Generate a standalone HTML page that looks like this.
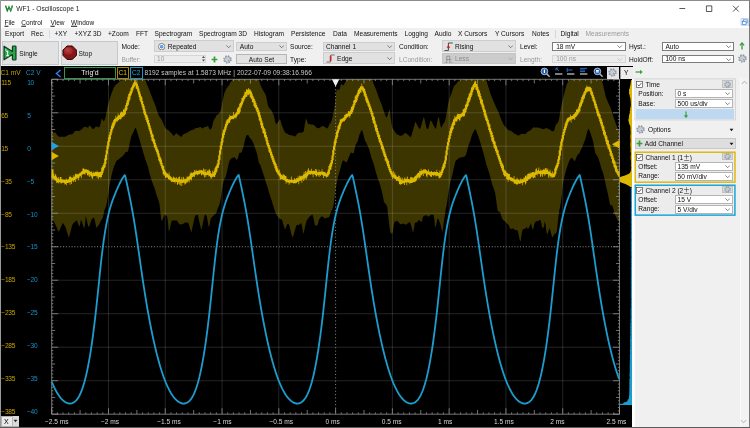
<!DOCTYPE html>
<html><head><meta charset="utf-8"><title>WF1 - Oscilloscope 1</title>
<style>
html,body{margin:0;padding:0}
body{width:750px;height:428px;overflow:hidden;position:relative;background:#f0f0f0;font-family:"Liberation Sans","Noto Sans CJK JP",sans-serif;font-size:6.6px;color:#111;line-height:1}
.a{position:absolute;white-space:nowrap}
.t{position:absolute;white-space:nowrap;transform:translateY(-50%)}
.tc{position:absolute;white-space:nowrap;transform:translate(-50%,-50%)}
.btn{position:absolute;background:#e2e2e2;border:0.6px solid #c2c9cf;box-sizing:border-box}
.cb{position:absolute;background:#fff;border:0.6px solid #b4b4b4;box-sizing:border-box;height:9.4px}
.cb.d{background:#e6e6e6;border-color:#cfcfcf;color:#9a9a9a}
.cb span{position:absolute;left:2.6px;top:50%;transform:translateY(-50%);white-space:nowrap}
.cb i{position:absolute;right:2.4px;top:2.4px;width:2.6px;height:2.6px;border-right:0.7px solid #555;border-bottom:0.7px solid #555;transform:rotate(45deg) scale(1.15,1.15);transform-origin:center}
.cb.d i{border-color:#aaa}
.g{color:#9a9a9a}
.yl{color:#c4a300}
.bl{color:#1b90c4}
#w{position:absolute;left:0;top:0;width:750px;height:428px;overflow:hidden;will-change:transform}
</style></head><body><div id="w">
<div class="a" style="left:0;top:0;width:750px;height:28px;background:#fff"></div>
<div class="a" style="left:0;top:0;width:750px;height:1px;background:#8c8c8c"></div>
<div class="a" style="left:0;top:0;width:1px;height:428px;background:#9a9a9a"></div>
<svg class="a" style="left:4.8px;top:5.2px" width="8" height="6.6" viewBox="0 0 8 6.6"><path d="M0.5 0.5 L2.3 5.8 L4 2 L5.7 5.8 L7.5 0.5" fill="none" stroke="#1f7f34" stroke-width="1.4" stroke-linejoin="miter"/><path d="M4 2 L5.7 5.8 L7.5 0.5" fill="none" stroke="#35a548" stroke-width="0.9"/></svg>
<div class="t" style="left:16.3px;top:9.3px;font-size:6.65px;color:#222">WF1 - Oscilloscope 1</div>
<svg class="a" style="left:600px;top:0" width="150" height="16" viewBox="0 0 150 16"><path d="M79.4 8.5h5.8 M106.4 5.9h5.4v5.6h-5.4z M133 5.8l5.8 5.8 M138.8 5.8l-5.8 5.8" fill="none" stroke="#222" stroke-width="0.75"/></svg>
<div class="t" style="left:4.5px;top:23.2px;font-size:6.5px"><u>F</u>ile</div>
<div class="t" style="left:21.3px;top:23.2px;font-size:6.5px"><u>C</u>ontrol</div>
<div class="t" style="left:50.5px;top:23.2px;font-size:6.5px"><u>V</u>iew</div>
<div class="t" style="left:71.0px;top:23.2px;font-size:6.5px"><u>W</u>indow</div>
<svg class="a" style="left:740.2px;top:17.8px" width="9.6" height="8.4" viewBox="0 0 9 9"><rect x="0.4" y="0.4" width="8.2" height="8.2" rx="1" fill="#dbe9fa" stroke="#9fc0ea" stroke-width="0.6"/><rect x="3" y="2" width="4" height="3.2" fill="#fff" stroke="#3f78c8" stroke-width="0.7"/><rect x="1.8" y="3.6" width="4" height="3.2" fill="#fff" stroke="#3f78c8" stroke-width="0.7"/></svg>
<div class="a" style="left:1px;top:28px;width:749px;height:12px;background:#f0f0f0"></div>
<div class="t" style="left:5.0px;top:34.2px">Export</div>
<div class="t" style="left:31.0px;top:34.2px">Rec.</div>
<div class="t" style="left:54.5px;top:34.2px">+XY</div>
<div class="t" style="left:74.5px;top:34.2px">+XYZ 3D</div>
<div class="t" style="left:108.0px;top:34.2px">+Zoom</div>
<div class="t" style="left:136.0px;top:34.2px">FFT</div>
<div class="t" style="left:154.5px;top:34.2px">Spectrogram</div>
<div class="t" style="left:199.0px;top:34.2px">Spectrogram 3D</div>
<div class="t" style="left:254.0px;top:34.2px">Histogram</div>
<div class="t" style="left:291.0px;top:34.2px">Persistence</div>
<div class="t" style="left:333.0px;top:34.2px">Data</div>
<div class="t" style="left:354.0px;top:34.2px">Measurements</div>
<div class="t" style="left:404.5px;top:34.2px">Logging</div>
<div class="t" style="left:434.5px;top:34.2px">Audio</div>
<div class="t" style="left:458.0px;top:34.2px">X Cursors</div>
<div class="t" style="left:495.0px;top:34.2px">Y Cursors</div>
<div class="t" style="left:532.0px;top:34.2px">Notes</div>
<div class="t" style="left:560.5px;top:34.2px">Digital</div>
<div class="t g" style="left:585.5px;top:34.2px">Measurements</div>
<div class="a" style="left:49.3px;top:30px;width:0.6px;height:8px;background:#dadada"></div>
<div class="a" style="left:555.3px;top:30px;width:0.6px;height:8px;background:#d6d6d6"></div>
<div class="btn" style="left:2px;top:41px;width:56.5px;height:23.5px"></div>
<div class="btn" style="left:61px;top:41px;width:56.5px;height:23.5px"></div>
<svg class="a" style="left:3.4px;top:44.8px" width="14" height="16" viewBox="0 0 14 16"><path d="M1 1.2 L1 14.8 L9.4 9.6 L9.4 14.2 Q9.4 15 10.2 15 L12.2 15 Q13 15 13 14.2 L13 1.8 Q13 1 12.2 1 L10.2 1 Q9.4 1 9.4 1.8 L9.4 6.4 Z" fill="#27a548" stroke="#0d3a1c" stroke-width="1.15" stroke-linejoin="round"/><path d="M2 3.4L4.4 5L2 6.2Z" fill="#8ad898"/><path d="M3.5 5.8h1.7v4.4h0.9v1h-3v-1h1v-3.2h-0.9z" fill="#fff"/></svg>
<div class="t" style="left:19.3px;top:53.8px">Single</div>
<svg class="a" style="left:62.2px;top:44.8px" width="15.4" height="15.4" viewBox="0 0 16 16"><path d="M5.2 1 L10.8 1 L15 5.2 L15 10.8 L10.8 15 L5.2 15 L1 10.8 L1 5.2 Z" fill="#861616" stroke="#2e0606" stroke-width="1"/><ellipse cx="6.6" cy="6" rx="4.6" ry="3.8" fill="#c24a4a" opacity="0.45"/><ellipse cx="6" cy="5.2" rx="2.6" ry="2" fill="#d06060" opacity="0.35"/></svg>
<div class="t" style="left:78.5px;top:53.8px">Stop</div>
<div class="t" style="left:121.5px;top:46.9px">Mode:</div>
<div class="t g" style="left:121.5px;top:59.5px">Buffer:</div>
<div class="a" style="left:154.0px;top:40.4px;width:80.4px;height:11.2px;background:#e1e1e1;border:0.6px solid #cdcdcd;box-sizing:border-box;color:#111"><span class="t" style="left:12.8px;top:5.5px">Repeated</span><svg class="a" style="right:2.0px;top:50%;margin-top:-1.3px" width="5.4" height="3.2" viewBox="0 0 5.4 3.2"><path d="M0.4 0.4L2.7 2.7L5 0.4" fill="none" stroke="#444" stroke-width="0.65"/></svg></div>
<svg class="a" style="left:157.6px;top:42.7px" width="7.4" height="7.4" viewBox="0 0 7.4 7.4"><circle cx="3.7" cy="3.7" r="3.2" fill="#fff" stroke="#505050" stroke-width="0.7"/><circle cx="3.7" cy="3.7" r="1.8" fill="#2f7fe0"/><path d="M3.2 2.9v1.6M4.2 2.9v1.6" stroke="#fff" stroke-width="0.45"/></svg>
<div class="a" style="left:236.0px;top:41.6px;width:51.0px;height:9.0px;background:#e1e1e1;border:0.6px solid #cdcdcd;box-sizing:border-box;color:#111"><span class="t" style="left:2.8px;top:4.3px">Auto</span><svg class="a" style="right:2.0px;top:50%;margin-top:-1.3px" width="5.4" height="3.2" viewBox="0 0 5.4 3.2"><path d="M0.4 0.4L2.7 2.7L5 0.4" fill="none" stroke="#444" stroke-width="0.65"/></svg></div>
<div class="a" style="left:154.0px;top:54.6px;width:52.4px;height:8.8px;background:#ececec;border:0.6px solid #d6d6d6;box-sizing:border-box;color:#9a9a9a"><span class="t" style="left:2.0px;top:3.8px">10</span></div>
<svg class="a" style="left:200.6px;top:55.2px" width="5" height="7.4" viewBox="0 0 5 7.4"><path d="M1 2.9L2.5 1L4 2.9Z M1 4.5L2.5 6.4L4 4.5Z" fill="#444"/></svg>
<svg class="a" style="left:210.7px;top:55.6px" width="7" height="7" viewBox="0 0 7 7"><path d="M3.5 0.6v5.8M0.6 3.5h5.8" stroke="#2da332" stroke-width="1.7"/></svg>
<svg class="a" style="left:223px;top:54.5px" width="9" height="9" viewBox="0 0 9 9"><circle cx="4.5" cy="4.5" r="3.5" fill="none" stroke="#8e98a4" stroke-width="1.5" stroke-dasharray="1.5 1.25"/><circle cx="4.5" cy="4.5" r="2.7" fill="#e6eaef" stroke="#808b98" stroke-width="0.8"/><circle cx="4.5" cy="4.5" r="1.1" fill="#fbfcfd" stroke="#7a8694" stroke-width="0.5"/><path d="M4.5 4.5L6.3 6.3" stroke="#5f8fc8" stroke-width="0.7"/></svg>
<div class="btn" style="left:236px;top:53.6px;width:51px;height:10.8px;border-color:#b6b6b6"></div>
<div class="tc" style="left:261.5px;top:59.5px">Auto Set</div>
<div class="t" style="left:290px;top:46.9px">Source:</div>
<div class="t" style="left:290px;top:59.5px">Type:</div>
<div class="a" style="left:323.0px;top:41.6px;width:72.4px;height:9.0px;background:#e1e1e1;border:0.6px solid #cdcdcd;box-sizing:border-box;color:#111"><span class="t" style="left:2.0px;top:4.3px">Channel 1</span><svg class="a" style="right:2.0px;top:50%;margin-top:-1.3px" width="5.4" height="3.2" viewBox="0 0 5.4 3.2"><path d="M0.4 0.4L2.7 2.7L5 0.4" fill="none" stroke="#444" stroke-width="0.65"/></svg></div>
<div class="a" style="left:323.0px;top:52.4px;width:72.4px;height:12.0px;background:#e1e1e1;border:0.6px solid #cdcdcd;box-sizing:border-box;color:#111"><span class="t" style="left:13.0px;top:6.0px">Edge</span><svg class="a" style="right:2.0px;top:50%;margin-top:-1.3px" width="5.4" height="3.2" viewBox="0 0 5.4 3.2"><path d="M0.4 0.4L2.7 2.7L5 0.4" fill="none" stroke="#444" stroke-width="0.65"/></svg></div>
<svg class="a" style="left:325.6px;top:54px" width="9" height="9" viewBox="0 0 9 9"><path d="M0.6 8H4.6V1H8.6" fill="none" stroke="#555" stroke-width="0.8"/><path d="M4.6 6.9V2.1" stroke="#d42020" stroke-width="1.7"/></svg>
<div class="t" style="left:399px;top:46.9px">Condition:</div>
<div class="t g" style="left:399px;top:59.5px">LCondition:</div>
<div class="a" style="left:442.0px;top:40.4px;width:74.4px;height:11.2px;background:#e1e1e1;border:0.6px solid #cdcdcd;box-sizing:border-box;color:#111"><span class="t" style="left:12.0px;top:5.5px">Rising</span><svg class="a" style="right:2.0px;top:50%;margin-top:-1.3px" width="5.4" height="3.2" viewBox="0 0 5.4 3.2"><path d="M0.4 0.4L2.7 2.7L5 0.4" fill="none" stroke="#444" stroke-width="0.65"/></svg></div>
<svg class="a" style="left:443.8px;top:41.6px" width="9.4" height="9.4" viewBox="0 0 9.4 9.4"><path d="M0.4 8.6H4.4V1H8.8" fill="none" stroke="#333" stroke-width="0.85"/><path d="M3 5.6L4.4 3.4L5.8 5.6Z" fill="#d81818" stroke="#d81818" stroke-width="0.5"/><path d="M4.4 5.4V6.6" stroke="#d81818" stroke-width="0.8"/></svg>
<div class="a" style="left:442.0px;top:53.0px;width:74.4px;height:11.4px;background:#cccccc;border:0.6px solid #c4c4c4;box-sizing:border-box;color:#8c8c8c"><span class="t" style="left:12.0px;top:5.4px">Less</span><svg class="a" style="right:2.0px;top:50%;margin-top:-1.3px" width="5.4" height="3.2" viewBox="0 0 5.4 3.2"><path d="M0.4 0.4L2.7 2.7L5 0.4" fill="none" stroke="#9a9a9a" stroke-width="0.65"/></svg></div>
<svg class="a" style="left:443.8px;top:54.6px" width="9.4" height="8.6" viewBox="0 0 9.4 8.6"><path d="M0.4 8H2.8V1.2H5.8V8H9 M2 4.6h5.4" fill="none" stroke="#8a8a8a" stroke-width="0.85"/></svg>
<div class="t" style="left:520px;top:46.9px">Level:</div>
<div class="t g" style="left:520px;top:59.5px">Length:</div>
<div class="a" style="left:552.4px;top:41.6px;width:73.2px;height:9.0px;background:#fff;border:0.6px solid #7c7c7c;box-sizing:border-box;color:#111"><span class="t" style="left:2.8px;top:4.3px">18 mV</span><svg class="a" style="right:2.0px;top:50%;margin-top:-1.3px" width="5.4" height="3.2" viewBox="0 0 5.4 3.2"><path d="M0.4 0.4L2.7 2.7L5 0.4" fill="none" stroke="#444" stroke-width="0.65"/></svg></div>
<div class="a" style="left:552.4px;top:54.6px;width:73.2px;height:8.8px;background:#ececec;border:0.6px solid #d6d6d6;box-sizing:border-box;color:#9a9a9a"><span class="t" style="left:2.8px;top:3.8px">100 ns</span><svg class="a" style="right:2.0px;top:50%;margin-top:-1.3px" width="5.4" height="3.2" viewBox="0 0 5.4 3.2"><path d="M0.4 0.4L2.7 2.7L5 0.4" fill="none" stroke="#b0b0b0" stroke-width="0.65"/></svg></div>
<div class="t" style="left:629px;top:46.9px">Hyst.:</div>
<div class="t" style="left:629px;top:59.5px">HoldOff:</div>
<div class="a" style="left:661.6px;top:41.6px;width:72.8px;height:9.0px;background:#fff;border:0.6px solid #7c7c7c;box-sizing:border-box;color:#111"><span class="t" style="left:2.8px;top:4.3px">Auto</span><svg class="a" style="right:2.0px;top:50%;margin-top:-1.3px" width="5.4" height="3.2" viewBox="0 0 5.4 3.2"><path d="M0.4 0.4L2.7 2.7L5 0.4" fill="none" stroke="#444" stroke-width="0.65"/></svg></div>
<div class="a" style="left:661.6px;top:54.6px;width:72.8px;height:8.8px;background:#fff;border:0.6px solid #7c7c7c;box-sizing:border-box;color:#111"><span class="t" style="left:2.8px;top:3.8px">100 ns</span><svg class="a" style="right:2.0px;top:50%;margin-top:-1.3px" width="5.4" height="3.2" viewBox="0 0 5.4 3.2"><path d="M0.4 0.4L2.7 2.7L5 0.4" fill="none" stroke="#444" stroke-width="0.65"/></svg></div>
<svg class="a" style="left:739px;top:42.3px" width="6" height="8" viewBox="0 0 6 8"><path d="M3 7.4V2.4 M0.9 3.4L3 0.9L5.1 3.4" fill="none" stroke="#3c9a3c" stroke-width="1.3"/></svg>
<svg class="a" style="left:737.5px;top:54.2px" width="9" height="9" viewBox="0 0 9 9"><circle cx="4.5" cy="4.5" r="3.5" fill="none" stroke="#8e98a4" stroke-width="1.5" stroke-dasharray="1.5 1.25"/><circle cx="4.5" cy="4.5" r="2.7" fill="#e6eaef" stroke="#808b98" stroke-width="0.8"/><circle cx="4.5" cy="4.5" r="1.1" fill="#fbfcfd" stroke="#7a8694" stroke-width="0.5"/><path d="M4.5 4.5L6.3 6.3" stroke="#5f8fc8" stroke-width="0.7"/></svg><div class="a" style="left:1px;top:66px;width:631.5px;height:362px;background:#000"></div>
<svg class="a" style="left:0;top:0" width="750" height="428" viewBox="0 0 750 428">
<path d="M51.7 128.1 L52.5 130.9 L53.3 133.3 L54.1 132.9 L54.9 132.0 L55.8 133.1 L56.6 134.3 L57.4 135.6 L58.2 136.3 L59.0 136.7 L59.8 136.7 L60.6 136.7 L61.4 136.7 L62.3 136.6 L63.1 136.7 L63.9 136.9 L64.7 136.8 L65.5 136.6 L66.3 136.2 L67.1 135.7 L67.9 135.3 L68.8 134.7 L69.6 134.5 L70.4 134.4 L71.2 134.3 L72.0 134.5 L72.8 133.8 L73.6 132.9 L74.4 131.8 L75.3 131.1 L76.1 130.9 L76.9 130.8 L77.7 130.8 L78.5 130.9 L79.3 131.0 L80.1 130.6 L80.9 129.9 L81.8 129.3 L82.6 128.4 L83.4 127.5 L84.2 126.9 L85.0 126.8 L85.8 127.0 L86.6 127.3 L87.4 127.7 L88.3 127.5 L89.1 125.9 L89.9 125.6 L90.7 126.6 L91.5 127.6 L92.3 128.6 L93.1 129.2 L93.9 128.7 L94.8 127.7 L95.6 126.8 L96.4 126.7 L97.2 126.7 L98.0 126.7 L98.8 127.4 L99.6 126.6 L100.4 124.3 L101.3 120.1 L102.1 118.2 L102.9 120.3 L103.7 121.4 L104.5 120.3 L105.3 118.0 L106.1 114.4 L106.9 110.2 L107.7 106.3 L108.6 103.2 L109.4 100.2 L110.2 97.4 L111.0 95.0 L111.8 92.8 L112.6 90.7 L113.4 88.7 L114.2 87.0 L115.1 85.6 L115.9 84.8 L116.7 84.1 L117.5 83.4 L118.3 82.7 L119.1 81.9 L119.9 81.4 L120.7 81.0 L121.6 80.6 L122.4 80.0 L123.2 79.3 L124.0 79.3 L124.8 79.3 L125.6 79.3 L126.4 79.3 L127.2 79.3 L128.1 79.3 L128.9 79.3 L129.7 79.3 L130.5 79.3 L131.3 79.3 L132.1 79.3 L132.9 79.3 L133.7 79.3 L134.6 79.3 L135.4 79.3 L136.2 79.3 L137.0 79.3 L137.8 79.3 L138.6 79.3 L139.4 79.3 L140.2 79.3 L141.1 79.3 L141.9 79.3 L142.7 79.3 L143.5 79.3 L144.3 79.3 L145.1 79.3 L145.9 81.4 L146.7 84.0 L147.6 85.9 L148.4 87.9 L149.2 89.7 L150.0 91.8 L150.8 93.9 L151.6 96.1 L152.4 98.3 L153.2 100.3 L154.1 102.3 L154.9 104.2 L155.7 106.5 L156.5 109.0 L157.3 111.4 L158.1 114.1 L158.9 115.7 L159.7 116.9 L160.5 118.0 L161.4 119.5 L162.2 121.1 L163.0 122.8 L163.8 124.7 L164.6 126.4 L165.4 127.9 L166.2 128.8 L167.0 129.4 L167.9 129.9 L168.7 130.6 L169.5 131.4 L170.3 132.3 L171.1 133.0 L171.9 133.8 L172.7 135.1 L173.5 136.0 L174.4 135.3 L175.2 134.4 L176.0 133.3 L176.8 133.5 L177.6 134.3 L178.4 134.9 L179.2 135.4 L180.0 136.1 L180.9 136.7 L181.7 136.8 L182.5 135.3 L183.3 134.2 L184.1 133.9 L184.9 133.6 L185.7 133.4 L186.5 132.9 L187.4 132.6 L188.2 132.1 L189.0 131.5 L189.8 130.9 L190.6 130.5 L191.4 130.3 L192.2 130.1 L193.0 129.8 L193.9 129.4 L194.7 128.8 L195.5 128.2 L196.3 127.9 L197.1 127.9 L197.9 128.0 L198.7 127.4 L199.5 127.2 L200.4 127.1 L201.2 127.6 L202.0 128.2 L202.8 128.4 L203.6 127.7 L204.4 127.1 L205.2 127.1 L206.0 127.0 L206.8 126.4 L207.7 125.8 L208.5 126.7 L209.3 128.7 L210.1 129.8 L210.9 129.0 L211.7 127.9 L212.5 125.2 L213.3 121.5 L214.2 119.5 L215.0 118.6 L215.8 116.7 L216.6 115.2 L217.4 114.8 L218.2 114.1 L219.0 113.7 L219.8 112.3 L220.7 110.6 L221.5 106.8 L222.3 102.6 L223.1 98.7 L223.9 95.1 L224.7 92.2 L225.5 90.4 L226.3 88.8 L227.2 87.6 L228.0 86.7 L228.8 85.5 L229.6 83.9 L230.4 82.5 L231.2 81.5 L232.0 80.7 L232.8 80.0 L233.7 79.4 L234.5 79.3 L235.3 79.3 L236.1 79.3 L236.9 79.3 L237.7 79.3 L238.5 79.3 L239.3 79.3 L240.2 79.3 L241.0 79.3 L241.8 79.3 L242.6 79.3 L243.4 79.3 L244.2 79.3 L245.0 79.3 L245.8 79.3 L246.7 79.3 L247.5 79.3 L248.3 79.3 L249.1 79.3 L249.9 79.3 L250.7 79.3 L251.5 79.3 L252.3 79.3 L253.2 79.3 L254.0 79.3 L254.8 79.3 L255.6 79.3 L256.4 79.3 L257.2 79.3 L258.0 79.3 L258.8 79.3 L259.6 82.1 L260.5 85.0 L261.3 86.9 L262.1 88.5 L262.9 90.1 L263.7 91.4 L264.5 92.7 L265.3 93.9 L266.1 96.3 L267.0 100.8 L267.8 105.2 L268.6 107.0 L269.4 108.0 L270.2 109.1 L271.0 110.0 L271.8 111.0 L272.6 112.9 L273.5 114.7 L274.3 117.4 L275.1 121.6 L275.9 123.9 L276.7 123.8 L277.5 123.1 L278.3 121.8 L279.1 120.4 L280.0 119.0 L280.8 121.8 L281.6 124.5 L282.4 126.6 L283.2 128.6 L284.0 130.6 L284.8 132.2 L285.6 132.8 L286.5 133.4 L287.3 133.8 L288.1 134.3 L288.9 134.8 L289.7 135.1 L290.5 135.2 L291.3 135.3 L292.1 135.4 L293.0 135.7 L293.8 136.1 L294.6 136.4 L295.4 136.3 L296.2 135.2 L297.0 134.2 L297.8 133.3 L298.6 133.0 L299.5 132.7 L300.3 132.7 L301.1 132.7 L301.9 132.5 L302.7 132.3 L303.5 132.0 L304.3 128.1 L305.1 123.0 L306.0 118.3 L306.8 120.4 L307.6 122.4 L308.4 124.4 L309.2 124.0 L310.0 124.1 L310.8 124.4 L311.6 124.7 L312.4 124.5 L313.3 124.8 L314.1 125.3 L314.9 126.0 L315.7 126.7 L316.5 127.4 L317.3 127.9 L318.1 128.3 L318.9 128.3 L319.8 127.8 L320.6 127.2 L321.4 126.6 L322.2 126.1 L323.0 126.2 L323.8 126.3 L324.6 126.7 L325.4 127.4 L326.3 128.1 L327.1 128.6 L327.9 127.9 L328.7 126.2 L329.5 124.1 L330.3 123.2 L331.1 121.9 L331.9 119.6 L332.8 115.9 L333.6 111.8 L334.4 108.1 L335.2 101.4 L336.0 94.0 L336.8 89.3 L337.6 89.5 L338.4 89.8 L339.3 90.0 L340.1 87.8 L340.9 84.6 L341.7 84.2 L342.5 85.1 L343.3 85.4 L344.1 84.3 L344.9 82.9 L345.8 81.2 L346.6 79.8 L347.4 79.3 L348.2 79.3 L349.0 79.3 L349.8 79.3 L350.6 79.3 L351.4 79.3 L352.3 79.3 L353.1 79.3 L353.9 79.3 L354.7 79.3 L355.5 79.3 L356.3 79.3 L357.1 79.3 L357.9 79.3 L358.8 79.3 L359.6 79.3 L360.4 79.3 L361.2 79.3 L362.0 79.3 L362.8 79.3 L363.6 79.3 L364.4 79.3 L365.2 79.3 L366.1 79.3 L366.9 79.3 L367.7 79.3 L368.5 79.3 L369.3 79.3 L370.1 79.3 L370.9 79.3 L371.7 79.3 L372.6 80.4 L373.4 83.2 L374.2 85.2 L375.0 87.2 L375.8 89.1 L376.6 91.2 L377.4 93.5 L378.2 95.9 L379.1 98.2 L379.9 100.3 L380.7 102.2 L381.5 104.2 L382.3 106.4 L383.1 108.9 L383.9 111.5 L384.7 113.7 L385.6 115.8 L386.4 117.8 L387.2 116.5 L388.0 114.1 L388.8 111.6 L389.6 109.3 L390.4 115.8 L391.2 121.8 L392.1 127.1 L392.9 128.7 L393.7 130.0 L394.5 131.3 L395.3 132.4 L396.1 133.5 L396.9 134.4 L397.7 134.6 L398.6 135.0 L399.4 135.4 L400.2 135.7 L401.0 135.7 L401.8 135.5 L402.6 135.2 L403.4 134.6 L404.2 133.8 L405.1 133.0 L405.9 133.0 L406.7 133.7 L407.5 134.4 L408.3 135.0 L409.1 135.9 L409.9 136.8 L410.7 137.2 L411.6 134.9 L412.4 132.3 L413.2 129.5 L414.0 126.6 L414.8 123.5 L415.6 121.8 L416.4 123.5 L417.2 125.2 L418.0 126.6 L418.9 128.1 L419.7 129.6 L420.5 127.8 L421.3 125.2 L422.1 122.5 L422.9 119.7 L423.7 117.0 L424.5 119.0 L425.4 123.0 L426.2 127.0 L427.0 129.0 L427.8 129.2 L428.6 127.8 L429.4 124.4 L430.2 121.0 L431.0 120.4 L431.9 122.1 L432.7 123.8 L433.5 125.2 L434.3 126.5 L435.1 127.9 L435.9 128.9 L436.7 124.8 L437.5 120.7 L438.4 116.8 L439.2 118.8 L440.0 123.3 L440.8 127.1 L441.6 127.7 L442.4 125.5 L443.2 123.9 L444.0 123.1 L444.9 121.4 L445.7 118.3 L446.5 114.0 L447.3 108.9 L448.1 104.6 L448.9 100.6 L449.7 98.0 L450.5 95.8 L451.4 93.8 L452.2 91.2 L453.0 88.7 L453.8 86.7 L454.6 85.4 L455.4 84.7 L456.2 84.1 L457.0 82.9 L457.9 81.7 L458.7 80.9 L459.5 80.8 L460.3 80.7 L461.1 80.6 L461.9 80.0 L462.7 79.3 L463.5 79.3 L464.4 79.3 L465.2 79.3 L466.0 79.3 L466.8 79.3 L467.6 79.3 L468.4 79.3 L469.2 79.3 L470.0 79.3 L470.8 79.3 L471.7 79.3 L472.5 79.3 L473.3 79.3 L474.1 79.3 L474.9 79.3 L475.7 79.3 L476.5 79.3 L477.3 79.3 L478.2 79.3 L479.0 79.3 L479.8 79.3 L480.6 79.3 L481.4 79.3 L482.2 79.3 L483.0 79.3 L483.8 79.3 L484.7 79.3 L485.5 79.3 L486.3 80.0 L487.1 82.7 L487.9 85.4 L488.7 88.1 L489.5 90.9 L490.3 93.3 L491.2 95.4 L492.0 97.6 L492.8 99.6 L493.6 101.5 L494.4 103.3 L495.2 105.1 L496.0 106.9 L496.8 108.7 L497.7 110.6 L498.5 112.4 L499.3 114.4 L500.1 116.6 L500.9 118.8 L501.7 120.5 L502.5 122.3 L503.3 124.3 L504.2 125.6 L505.0 126.5 L505.8 127.2 L506.6 128.2 L507.4 129.1 L508.2 129.9 L509.0 130.4 L509.8 130.5 L510.7 130.7 L511.5 131.2 L512.3 131.9 L513.1 132.6 L513.9 133.3 L514.7 133.8 L515.5 134.2 L516.3 134.5 L517.1 135.0 L518.0 135.5 L518.8 135.4 L519.6 135.1 L520.4 134.6 L521.2 134.0 L522.0 133.7 L522.8 133.8 L523.6 133.9 L524.5 134.0 L525.3 133.8 L526.1 133.6 L526.9 132.6 L527.7 131.7 L528.5 131.3 L529.3 131.0 L530.1 130.6 L531.0 129.8 L531.8 129.0 L532.6 128.1 L533.4 127.6 L534.2 127.3 L535.0 127.6 L535.8 127.8 L536.6 127.6 L537.5 127.5 L538.3 127.5 L539.1 127.8 L539.9 128.1 L540.7 128.5 L541.5 128.7 L542.3 129.0 L543.1 129.2 L544.0 129.0 L544.8 128.7 L545.6 128.3 L546.4 128.1 L547.2 128.4 L548.0 128.7 L548.8 129.0 L549.6 129.6 L550.5 130.2 L551.3 130.8 L552.1 131.0 L552.9 131.2 L553.7 131.2 L554.5 129.4 L555.3 126.6 L556.1 124.3 L557.0 123.6 L557.8 122.7 L558.6 120.7 L559.4 117.2 L560.2 112.3 L561.0 107.8 L561.8 104.0 L562.6 100.2 L563.5 96.6 L564.3 93.3 L565.1 90.3 L565.9 87.3 L566.7 84.6 L567.5 82.7 L568.3 81.4 L569.1 80.6 L569.9 79.9 L570.8 79.3 L571.6 79.3 L572.4 79.3 L573.2 79.3 L574.0 79.3 L574.8 79.3 L575.6 79.3 L576.4 79.3 L577.3 79.3 L578.1 79.3 L578.9 79.3 L579.7 79.3 L580.5 79.3 L581.3 79.3 L582.1 79.3 L582.9 79.3 L583.8 79.3 L584.6 79.3 L585.4 79.3 L586.2 79.3 L587.0 79.3 L587.8 79.3 L588.6 79.3 L589.4 79.3 L590.3 79.3 L591.1 79.3 L591.9 79.3 L592.7 79.3 L593.5 79.3 L594.3 79.3 L595.1 79.3 L595.9 79.3 L596.8 79.3 L597.6 79.3 L598.4 79.3 L599.2 79.3 L600.0 79.3 L600.8 79.3 L601.6 79.3 L602.4 82.2 L603.3 85.8 L604.1 89.5 L604.9 93.1 L605.7 96.6 L606.5 98.7 L607.3 100.6 L608.1 102.4 L608.9 104.2 L609.8 106.0 L610.6 108.1 L611.4 110.6 L612.2 113.1 L613.0 115.6 L613.8 118.0 L614.6 120.3 L615.4 122.5 L616.3 125.0 L617.1 127.3 L617.9 128.8 L618.7 129.2 L619.5 129.3 L619.5 221.0 L618.7 220.6 L617.9 220.3 L617.1 219.1 L616.3 217.6 L615.4 215.7 L614.6 213.2 L613.8 210.4 L613.0 207.6 L612.2 205.3 L611.4 205.6 L610.6 205.3 L609.8 203.6 L608.9 199.0 L608.1 194.7 L607.3 191.3 L606.5 188.3 L605.7 184.4 L604.9 180.5 L604.1 177.0 L603.3 173.5 L602.4 171.1 L601.6 169.2 L600.8 166.5 L600.0 163.5 L599.2 160.7 L598.4 158.2 L597.6 156.8 L596.8 155.4 L595.9 154.1 L595.1 152.5 L594.3 148.1 L593.5 143.5 L592.7 140.1 L591.9 137.6 L591.1 135.0 L590.3 132.5 L589.4 130.4 L588.6 128.7 L587.8 129.8 L587.0 132.5 L586.2 135.9 L585.4 139.1 L584.6 141.1 L583.8 143.2 L582.9 145.3 L582.1 147.6 L581.3 149.0 L580.5 150.4 L579.7 152.4 L578.9 153.6 L578.1 154.5 L577.3 155.3 L576.4 157.4 L575.6 159.4 L574.8 161.3 L574.0 160.3 L573.2 159.3 L572.4 158.2 L571.6 157.6 L570.8 158.4 L569.9 159.5 L569.1 161.2 L568.3 163.5 L567.5 165.8 L566.7 168.3 L565.9 171.0 L565.1 173.9 L564.3 177.3 L563.5 180.9 L562.6 187.1 L561.8 194.9 L561.0 201.0 L560.2 206.4 L559.4 209.8 L558.6 215.3 L557.8 222.6 L557.0 230.7 L556.1 232.9 L555.3 233.7 L554.5 233.8 L553.7 235.2 L552.9 236.7 L552.1 237.3 L551.3 234.3 L550.5 231.1 L549.6 228.0 L548.8 230.2 L548.0 232.3 L547.2 234.5 L546.4 231.9 L545.6 224.6 L544.8 221.0 L544.0 226.4 L543.1 228.3 L542.3 227.6 L541.5 224.2 L540.7 220.6 L539.9 219.4 L539.1 220.5 L538.3 220.9 L537.5 221.2 L536.6 221.1 L535.8 221.4 L535.0 222.4 L534.2 224.5 L533.4 228.5 L532.6 229.8 L531.8 226.7 L531.0 223.3 L530.1 225.0 L529.3 226.7 L528.5 228.5 L527.7 228.9 L526.9 227.0 L526.1 227.5 L525.3 228.8 L524.5 229.1 L523.6 229.1 L522.8 229.2 L522.0 231.9 L521.2 237.0 L520.4 241.9 L519.6 239.5 L518.8 235.5 L518.0 231.5 L517.1 230.1 L516.3 230.3 L515.5 230.1 L514.7 229.4 L513.9 229.0 L513.1 228.4 L512.3 228.5 L511.5 228.9 L510.7 229.1 L509.8 227.8 L509.0 226.1 L508.2 224.6 L507.4 224.1 L506.6 223.3 L505.8 222.1 L505.0 221.3 L504.2 220.7 L503.3 220.3 L502.5 219.2 L501.7 217.3 L500.9 214.7 L500.1 211.9 L499.3 211.7 L498.5 211.3 L497.7 210.8 L496.8 204.7 L496.0 198.8 L495.2 193.3 L494.4 190.4 L493.6 188.2 L492.8 185.9 L492.0 183.7 L491.2 180.3 L490.3 177.1 L489.5 173.9 L488.7 171.4 L487.9 169.0 L487.1 166.7 L486.3 164.5 L485.5 161.2 L484.7 157.7 L483.8 154.5 L483.0 151.8 L482.2 149.1 L481.4 146.3 L480.6 143.4 L479.8 140.7 L479.0 138.3 L478.2 136.1 L477.3 133.6 L476.5 131.2 L475.7 129.7 L474.9 129.3 L474.1 130.8 L473.3 132.3 L472.5 133.8 L471.7 135.8 L470.8 139.0 L470.0 141.8 L469.2 143.5 L468.4 145.4 L467.6 148.3 L466.8 151.8 L466.0 154.4 L465.2 156.1 L464.4 156.4 L463.5 156.7 L462.7 157.0 L461.9 157.2 L461.1 157.4 L460.3 157.5 L459.5 157.7 L458.7 158.4 L457.9 159.1 L457.0 159.8 L456.2 160.3 L455.4 161.6 L454.6 164.7 L453.8 168.2 L453.0 171.7 L452.2 175.3 L451.4 178.2 L450.5 181.4 L449.7 185.1 L448.9 189.4 L448.1 195.2 L447.3 201.1 L446.5 205.8 L445.7 209.2 L444.9 214.7 L444.0 220.6 L443.2 226.9 L442.4 232.3 L441.6 229.3 L440.8 225.6 L440.0 223.1 L439.2 221.1 L438.4 219.0 L437.5 218.4 L436.7 222.3 L435.9 226.2 L435.1 227.3 L434.3 219.0 L433.5 214.8 L432.7 214.7 L431.9 214.7 L431.0 214.6 L430.2 215.3 L429.4 216.0 L428.6 216.7 L427.8 216.2 L427.0 215.5 L426.2 215.1 L425.4 215.7 L424.5 215.5 L423.7 216.2 L422.9 217.1 L422.1 220.3 L421.3 222.4 L420.5 221.3 L419.7 220.2 L418.9 220.0 L418.0 220.9 L417.2 221.9 L416.4 222.5 L415.6 222.5 L414.8 223.0 L414.0 227.9 L413.2 232.6 L412.4 230.6 L411.6 227.2 L410.7 223.9 L409.9 221.8 L409.1 222.6 L408.3 223.1 L407.5 223.6 L406.7 224.5 L405.9 224.5 L405.1 224.5 L404.2 224.0 L403.4 223.6 L402.6 223.8 L401.8 224.1 L401.0 224.3 L400.2 224.2 L399.4 223.3 L398.6 222.2 L397.7 221.2 L396.9 221.1 L396.1 221.2 L395.3 221.5 L394.5 221.8 L393.7 224.9 L392.9 231.4 L392.1 234.1 L391.2 233.3 L390.4 232.2 L389.6 227.6 L388.8 221.0 L388.0 213.9 L387.2 206.6 L386.4 205.1 L385.6 203.8 L384.7 203.0 L383.9 201.6 L383.1 197.3 L382.3 193.2 L381.5 189.9 L380.7 187.0 L379.9 184.1 L379.1 181.7 L378.2 179.4 L377.4 177.2 L376.6 174.6 L375.8 171.9 L375.0 168.8 L374.2 165.8 L373.4 163.0 L372.6 160.8 L371.7 158.5 L370.9 155.8 L370.1 152.9 L369.3 150.1 L368.5 147.7 L367.7 145.7 L366.9 144.1 L366.1 142.5 L365.2 141.1 L364.4 138.4 L363.6 135.1 L362.8 132.2 L362.0 129.9 L361.2 130.8 L360.4 132.4 L359.6 134.2 L358.8 137.3 L357.9 140.5 L357.1 142.6 L356.3 143.6 L355.5 145.0 L354.7 148.5 L353.9 152.6 L353.1 153.4 L352.3 152.9 L351.4 152.5 L350.6 153.1 L349.8 154.8 L349.0 156.7 L348.2 158.6 L347.4 161.0 L346.6 162.2 L345.8 162.2 L344.9 161.6 L344.1 160.6 L343.3 160.4 L342.5 161.0 L341.7 163.6 L340.9 166.7 L340.1 169.8 L339.3 172.5 L338.4 175.3 L337.6 178.8 L336.8 182.7 L336.0 187.1 L335.2 192.5 L334.4 198.7 L333.6 204.5 L332.8 208.0 L331.9 209.9 L331.1 211.0 L330.3 213.9 L329.5 216.4 L328.7 217.6 L327.9 217.6 L327.1 217.7 L326.3 218.1 L325.4 218.5 L324.6 218.3 L323.8 217.6 L323.0 216.9 L322.2 216.3 L321.4 216.5 L320.6 217.5 L319.8 218.4 L318.9 219.8 L318.1 223.2 L317.3 225.8 L316.5 225.6 L315.7 225.4 L314.9 225.2 L314.1 221.3 L313.3 217.0 L312.4 214.6 L311.6 215.1 L310.8 215.7 L310.0 216.2 L309.2 217.1 L308.4 218.3 L307.6 219.5 L306.8 220.3 L306.0 223.0 L305.1 226.5 L304.3 230.2 L303.5 233.9 L302.7 230.4 L301.9 225.6 L301.1 223.0 L300.3 223.7 L299.5 224.4 L298.6 225.2 L297.8 224.7 L297.0 225.1 L296.2 226.0 L295.4 228.4 L294.6 231.2 L293.8 234.0 L293.0 236.8 L292.1 236.8 L291.3 233.5 L290.5 230.2 L289.7 227.1 L288.9 224.4 L288.1 224.1 L287.3 223.9 L286.5 226.1 L285.6 228.2 L284.8 229.1 L284.0 226.4 L283.2 223.7 L282.4 221.1 L281.6 219.3 L280.8 219.3 L280.0 219.1 L279.1 218.3 L278.3 217.4 L277.5 216.1 L276.7 214.9 L275.9 213.4 L275.1 211.6 L274.3 209.0 L273.5 206.2 L272.6 203.5 L271.8 200.8 L271.0 198.5 L270.2 196.1 L269.4 193.7 L268.6 191.1 L267.8 188.3 L267.0 185.6 L266.1 182.9 L265.3 180.1 L264.5 177.5 L263.7 174.9 L262.9 172.7 L262.1 170.4 L261.3 168.0 L260.5 165.2 L259.6 163.9 L258.8 162.6 L258.0 158.5 L257.2 154.6 L256.4 151.7 L255.6 149.5 L254.8 147.2 L254.0 144.8 L253.2 142.7 L252.3 141.0 L251.5 139.7 L250.7 138.8 L249.9 137.9 L249.1 136.7 L248.3 134.9 L247.5 135.1 L246.7 135.3 L245.8 137.1 L245.0 140.2 L244.2 143.6 L243.4 146.8 L242.6 149.2 L241.8 151.8 L241.0 152.7 L240.2 152.7 L239.3 152.7 L238.5 155.7 L237.7 158.5 L236.9 160.1 L236.1 159.2 L235.3 158.0 L234.5 157.2 L233.7 157.5 L232.8 157.7 L232.0 158.0 L231.2 158.7 L230.4 159.6 L229.6 160.8 L228.8 163.3 L228.0 166.7 L227.2 170.6 L226.3 174.7 L225.5 177.3 L224.7 178.6 L223.9 180.3 L223.1 183.4 L222.3 188.0 L221.5 193.5 L220.7 199.0 L219.8 203.2 L219.0 205.7 L218.2 207.2 L217.4 209.5 L216.6 212.1 L215.8 213.7 L215.0 214.2 L214.2 214.7 L213.3 215.7 L212.5 216.6 L211.7 217.4 L210.9 218.3 L210.1 222.0 L209.3 226.2 L208.5 226.6 L207.7 221.3 L206.8 216.4 L206.0 215.1 L205.2 214.3 L204.4 215.9 L203.6 219.7 L202.8 223.4 L202.0 227.2 L201.2 229.7 L200.4 225.9 L199.5 222.6 L198.7 218.9 L197.9 215.2 L197.1 214.7 L196.3 214.9 L195.5 215.5 L194.7 216.9 L193.9 220.8 L193.0 224.7 L192.2 228.5 L191.4 232.5 L190.6 230.0 L189.8 227.4 L189.0 224.8 L188.2 222.7 L187.4 222.7 L186.5 222.4 L185.7 222.2 L184.9 222.7 L184.1 223.2 L183.3 223.8 L182.5 224.0 L181.7 224.2 L180.9 224.4 L180.0 224.5 L179.2 224.1 L178.4 222.8 L177.6 221.3 L176.8 220.5 L176.0 220.6 L175.2 220.6 L174.4 220.6 L173.5 220.6 L172.7 220.6 L171.9 220.6 L171.1 222.9 L170.3 226.6 L169.5 230.4 L168.7 231.1 L167.9 221.2 L167.0 216.1 L166.2 215.6 L165.4 215.2 L164.6 214.8 L163.8 216.2 L163.0 218.5 L162.2 220.6 L161.4 220.6 L160.5 213.2 L159.7 205.7 L158.9 201.2 L158.1 199.2 L157.3 197.0 L156.5 194.7 L155.7 192.0 L154.9 189.5 L154.1 187.1 L153.2 184.8 L152.4 182.5 L151.6 180.1 L150.8 177.7 L150.0 175.0 L149.2 171.7 L148.4 168.4 L147.6 165.6 L146.7 163.3 L145.9 161.0 L145.1 158.8 L144.3 156.1 L143.5 153.4 L142.7 150.6 L141.9 147.8 L141.1 144.9 L140.2 142.0 L139.4 139.3 L138.6 136.8 L137.8 134.0 L137.0 131.2 L136.2 129.1 L135.4 127.4 L134.6 129.3 L133.7 131.5 L132.9 132.9 L132.1 134.6 L131.3 136.6 L130.5 139.8 L129.7 143.3 L128.9 147.0 L128.1 150.9 L127.2 151.9 L126.4 151.9 L125.6 152.1 L124.8 153.4 L124.0 154.6 L123.2 155.5 L122.4 156.3 L121.6 156.9 L120.7 157.5 L119.9 158.2 L119.1 158.9 L118.3 159.6 L117.5 160.0 L116.7 160.7 L115.9 162.0 L115.1 163.9 L114.2 166.1 L113.4 168.5 L112.6 171.0 L111.8 174.2 L111.0 177.9 L110.2 181.8 L109.4 186.0 L108.6 191.3 L107.7 197.2 L106.9 202.4 L106.1 206.0 L105.3 208.3 L104.5 210.1 L103.7 213.4 L102.9 216.9 L102.1 219.2 L101.3 220.1 L100.4 221.6 L99.6 223.4 L98.8 225.0 L98.0 226.1 L97.2 227.0 L96.4 228.0 L95.6 224.6 L94.8 220.4 L93.9 217.6 L93.1 218.2 L92.3 218.8 L91.5 219.4 L90.7 221.9 L89.9 224.4 L89.1 226.8 L88.3 226.5 L87.4 222.9 L86.6 219.2 L85.8 215.8 L85.0 224.5 L84.2 228.8 L83.4 226.4 L82.6 223.8 L81.8 221.3 L80.9 220.1 L80.1 224.0 L79.3 227.0 L78.5 224.7 L77.7 222.6 L76.9 220.5 L76.1 220.6 L75.3 221.4 L74.4 222.3 L73.6 223.1 L72.8 223.9 L72.0 225.7 L71.2 229.0 L70.4 232.3 L69.6 235.4 L68.8 237.4 L67.9 234.8 L67.1 232.2 L66.3 229.5 L65.5 226.9 L64.7 225.7 L63.9 224.4 L63.1 223.0 L62.3 223.8 L61.4 226.1 L60.6 227.8 L59.8 229.6 L59.0 231.4 L58.2 230.9 L57.4 229.1 L56.6 227.3 L55.8 225.4 L54.9 223.5 L54.1 221.9 L53.3 220.3 L52.5 220.0 L51.7 219.5Z" fill="#3d3500"/>
<path d="M108.48 79.3V414.2 M51.7 112.79H619.5 M165.26 79.3V414.2 M51.7 146.28H619.5 M222.04 79.3V414.2 M51.7 179.77H619.5 M278.82 79.3V414.2 M51.7 213.26H619.5 M392.38 79.3V414.2 M51.7 280.24H619.5 M449.16 79.3V414.2 M51.7 313.73H619.5 M505.94 79.3V414.2 M51.7 347.22H619.5 M562.72 79.3V414.2 M51.7 380.71H619.5" stroke="rgba(255,255,255,0.16)" stroke-width="0.9" fill="none"/>
<path d="M51.7 246.75H619.5" stroke="#8c8c8c" stroke-width="1" stroke-dasharray="1 1.839" fill="none"/>
<path d="M335.60 79.3V414.2" stroke="#8c8c8c" stroke-width="1" stroke-dasharray="1 2.349" fill="none"/>
<path d="M51.7 79.3H619.5V414.2H51.7Z" fill="none" stroke="rgba(255,255,255,0.5)" stroke-width="0.9"/>
<path d="M51.70 79.3v6.0M51.70 414.2v-6.0M51.7 79.30h6.5M619.5 79.30h-6.5M57.38 79.3v1.8M57.38 414.2v-1.8M51.7 82.65h1.6M619.5 82.65h-1.6M63.06 79.3v1.8M63.06 414.2v-1.8M51.7 86.00h1.6M619.5 86.00h-1.6M68.73 79.3v1.8M68.73 414.2v-1.8M51.7 89.35h1.6M619.5 89.35h-1.6M74.41 79.3v1.8M74.41 414.2v-1.8M51.7 92.70h1.6M619.5 92.70h-1.6M80.09 79.3v4.2M80.09 414.2v-4.2M51.7 96.04h3.4M619.5 96.04h-3.4M85.77 79.3v1.8M85.77 414.2v-1.8M51.7 99.39h1.6M619.5 99.39h-1.6M91.45 79.3v1.8M91.45 414.2v-1.8M51.7 102.74h1.6M619.5 102.74h-1.6M97.12 79.3v1.8M97.12 414.2v-1.8M51.7 106.09h1.6M619.5 106.09h-1.6M102.80 79.3v1.8M102.80 414.2v-1.8M51.7 109.44h1.6M619.5 109.44h-1.6M108.48 79.3v6.0M108.48 414.2v-6.0M51.7 112.79h6.5M619.5 112.79h-6.5M114.16 79.3v1.8M114.16 414.2v-1.8M51.7 116.14h1.6M619.5 116.14h-1.6M119.84 79.3v1.8M119.84 414.2v-1.8M51.7 119.49h1.6M619.5 119.49h-1.6M125.51 79.3v1.8M125.51 414.2v-1.8M51.7 122.84h1.6M619.5 122.84h-1.6M131.19 79.3v1.8M131.19 414.2v-1.8M51.7 126.19h1.6M619.5 126.19h-1.6M136.87 79.3v4.2M136.87 414.2v-4.2M51.7 129.53h3.4M619.5 129.53h-3.4M142.55 79.3v1.8M142.55 414.2v-1.8M51.7 132.88h1.6M619.5 132.88h-1.6M148.23 79.3v1.8M148.23 414.2v-1.8M51.7 136.23h1.6M619.5 136.23h-1.6M153.90 79.3v1.8M153.90 414.2v-1.8M51.7 139.58h1.6M619.5 139.58h-1.6M159.58 79.3v1.8M159.58 414.2v-1.8M51.7 142.93h1.6M619.5 142.93h-1.6M165.26 79.3v6.0M165.26 414.2v-6.0M51.7 146.28h6.5M619.5 146.28h-6.5M170.94 79.3v1.8M170.94 414.2v-1.8M51.7 149.63h1.6M619.5 149.63h-1.6M176.62 79.3v1.8M176.62 414.2v-1.8M51.7 152.98h1.6M619.5 152.98h-1.6M182.29 79.3v1.8M182.29 414.2v-1.8M51.7 156.33h1.6M619.5 156.33h-1.6M187.97 79.3v1.8M187.97 414.2v-1.8M51.7 159.68h1.6M619.5 159.68h-1.6M193.65 79.3v4.2M193.65 414.2v-4.2M51.7 163.02h3.4M619.5 163.02h-3.4M199.33 79.3v1.8M199.33 414.2v-1.8M51.7 166.37h1.6M619.5 166.37h-1.6M205.01 79.3v1.8M205.01 414.2v-1.8M51.7 169.72h1.6M619.5 169.72h-1.6M210.68 79.3v1.8M210.68 414.2v-1.8M51.7 173.07h1.6M619.5 173.07h-1.6M216.36 79.3v1.8M216.36 414.2v-1.8M51.7 176.42h1.6M619.5 176.42h-1.6M222.04 79.3v6.0M222.04 414.2v-6.0M51.7 179.77h6.5M619.5 179.77h-6.5M227.72 79.3v1.8M227.72 414.2v-1.8M51.7 183.12h1.6M619.5 183.12h-1.6M233.40 79.3v1.8M233.40 414.2v-1.8M51.7 186.47h1.6M619.5 186.47h-1.6M239.07 79.3v1.8M239.07 414.2v-1.8M51.7 189.82h1.6M619.5 189.82h-1.6M244.75 79.3v1.8M244.75 414.2v-1.8M51.7 193.17h1.6M619.5 193.17h-1.6M250.43 79.3v4.2M250.43 414.2v-4.2M51.7 196.51h3.4M619.5 196.51h-3.4M256.11 79.3v1.8M256.11 414.2v-1.8M51.7 199.86h1.6M619.5 199.86h-1.6M261.79 79.3v1.8M261.79 414.2v-1.8M51.7 203.21h1.6M619.5 203.21h-1.6M267.46 79.3v1.8M267.46 414.2v-1.8M51.7 206.56h1.6M619.5 206.56h-1.6M273.14 79.3v1.8M273.14 414.2v-1.8M51.7 209.91h1.6M619.5 209.91h-1.6M278.82 79.3v6.0M278.82 414.2v-6.0M51.7 213.26h6.5M619.5 213.26h-6.5M284.50 79.3v1.8M284.50 414.2v-1.8M51.7 216.61h1.6M619.5 216.61h-1.6M290.18 79.3v1.8M290.18 414.2v-1.8M51.7 219.96h1.6M619.5 219.96h-1.6M295.85 79.3v1.8M295.85 414.2v-1.8M51.7 223.31h1.6M619.5 223.31h-1.6M301.53 79.3v1.8M301.53 414.2v-1.8M51.7 226.66h1.6M619.5 226.66h-1.6M307.21 79.3v4.2M307.21 414.2v-4.2M51.7 230.00h3.4M619.5 230.00h-3.4M312.89 79.3v1.8M312.89 414.2v-1.8M51.7 233.35h1.6M619.5 233.35h-1.6M318.57 79.3v1.8M318.57 414.2v-1.8M51.7 236.70h1.6M619.5 236.70h-1.6M324.24 79.3v1.8M324.24 414.2v-1.8M51.7 240.05h1.6M619.5 240.05h-1.6M329.92 79.3v1.8M329.92 414.2v-1.8M51.7 243.40h1.6M619.5 243.40h-1.6M335.60 79.3v6.0M335.60 414.2v-6.0M51.7 246.75h6.5M619.5 246.75h-6.5M341.28 79.3v1.8M341.28 414.2v-1.8M51.7 250.10h1.6M619.5 250.10h-1.6M346.96 79.3v1.8M346.96 414.2v-1.8M51.7 253.45h1.6M619.5 253.45h-1.6M352.63 79.3v1.8M352.63 414.2v-1.8M51.7 256.80h1.6M619.5 256.80h-1.6M358.31 79.3v1.8M358.31 414.2v-1.8M51.7 260.15h1.6M619.5 260.15h-1.6M363.99 79.3v4.2M363.99 414.2v-4.2M51.7 263.50h3.4M619.5 263.50h-3.4M369.67 79.3v1.8M369.67 414.2v-1.8M51.7 266.84h1.6M619.5 266.84h-1.6M375.35 79.3v1.8M375.35 414.2v-1.8M51.7 270.19h1.6M619.5 270.19h-1.6M381.02 79.3v1.8M381.02 414.2v-1.8M51.7 273.54h1.6M619.5 273.54h-1.6M386.70 79.3v1.8M386.70 414.2v-1.8M51.7 276.89h1.6M619.5 276.89h-1.6M392.38 79.3v6.0M392.38 414.2v-6.0M51.7 280.24h6.5M619.5 280.24h-6.5M398.06 79.3v1.8M398.06 414.2v-1.8M51.7 283.59h1.6M619.5 283.59h-1.6M403.74 79.3v1.8M403.74 414.2v-1.8M51.7 286.94h1.6M619.5 286.94h-1.6M409.41 79.3v1.8M409.41 414.2v-1.8M51.7 290.29h1.6M619.5 290.29h-1.6M415.09 79.3v1.8M415.09 414.2v-1.8M51.7 293.64h1.6M619.5 293.64h-1.6M420.77 79.3v4.2M420.77 414.2v-4.2M51.7 296.98h3.4M619.5 296.98h-3.4M426.45 79.3v1.8M426.45 414.2v-1.8M51.7 300.33h1.6M619.5 300.33h-1.6M432.13 79.3v1.8M432.13 414.2v-1.8M51.7 303.68h1.6M619.5 303.68h-1.6M437.80 79.3v1.8M437.80 414.2v-1.8M51.7 307.03h1.6M619.5 307.03h-1.6M443.48 79.3v1.8M443.48 414.2v-1.8M51.7 310.38h1.6M619.5 310.38h-1.6M449.16 79.3v6.0M449.16 414.2v-6.0M51.7 313.73h6.5M619.5 313.73h-6.5M454.84 79.3v1.8M454.84 414.2v-1.8M51.7 317.08h1.6M619.5 317.08h-1.6M460.52 79.3v1.8M460.52 414.2v-1.8M51.7 320.43h1.6M619.5 320.43h-1.6M466.19 79.3v1.8M466.19 414.2v-1.8M51.7 323.78h1.6M619.5 323.78h-1.6M471.87 79.3v1.8M471.87 414.2v-1.8M51.7 327.13h1.6M619.5 327.13h-1.6M477.55 79.3v4.2M477.55 414.2v-4.2M51.7 330.47h3.4M619.5 330.47h-3.4M483.23 79.3v1.8M483.23 414.2v-1.8M51.7 333.82h1.6M619.5 333.82h-1.6M488.91 79.3v1.8M488.91 414.2v-1.8M51.7 337.17h1.6M619.5 337.17h-1.6M494.58 79.3v1.8M494.58 414.2v-1.8M51.7 340.52h1.6M619.5 340.52h-1.6M500.26 79.3v1.8M500.26 414.2v-1.8M51.7 343.87h1.6M619.5 343.87h-1.6M505.94 79.3v6.0M505.94 414.2v-6.0M51.7 347.22h6.5M619.5 347.22h-6.5M511.62 79.3v1.8M511.62 414.2v-1.8M51.7 350.57h1.6M619.5 350.57h-1.6M517.30 79.3v1.8M517.30 414.2v-1.8M51.7 353.92h1.6M619.5 353.92h-1.6M522.97 79.3v1.8M522.97 414.2v-1.8M51.7 357.27h1.6M619.5 357.27h-1.6M528.65 79.3v1.8M528.65 414.2v-1.8M51.7 360.62h1.6M619.5 360.62h-1.6M534.33 79.3v4.2M534.33 414.2v-4.2M51.7 363.96h3.4M619.5 363.96h-3.4M540.01 79.3v1.8M540.01 414.2v-1.8M51.7 367.31h1.6M619.5 367.31h-1.6M545.69 79.3v1.8M545.69 414.2v-1.8M51.7 370.66h1.6M619.5 370.66h-1.6M551.36 79.3v1.8M551.36 414.2v-1.8M51.7 374.01h1.6M619.5 374.01h-1.6M557.04 79.3v1.8M557.04 414.2v-1.8M51.7 377.36h1.6M619.5 377.36h-1.6M562.72 79.3v6.0M562.72 414.2v-6.0M51.7 380.71h6.5M619.5 380.71h-6.5M568.40 79.3v1.8M568.40 414.2v-1.8M51.7 384.06h1.6M619.5 384.06h-1.6M574.08 79.3v1.8M574.08 414.2v-1.8M51.7 387.41h1.6M619.5 387.41h-1.6M579.75 79.3v1.8M579.75 414.2v-1.8M51.7 390.76h1.6M619.5 390.76h-1.6M585.43 79.3v1.8M585.43 414.2v-1.8M51.7 394.11h1.6M619.5 394.11h-1.6M591.11 79.3v4.2M591.11 414.2v-4.2M51.7 397.45h3.4M619.5 397.45h-3.4M596.79 79.3v1.8M596.79 414.2v-1.8M51.7 400.80h1.6M619.5 400.80h-1.6M602.47 79.3v1.8M602.47 414.2v-1.8M51.7 404.15h1.6M619.5 404.15h-1.6M608.14 79.3v1.8M608.14 414.2v-1.8M51.7 407.50h1.6M619.5 407.50h-1.6M613.82 79.3v1.8M613.82 414.2v-1.8M51.7 410.85h1.6M619.5 410.85h-1.6M619.50 79.3v6.0M619.50 414.2v-6.0M51.7 414.20h6.5M619.5 414.20h-6.5" stroke="#a0a0a0" stroke-width="0.7" fill="none"/>
<path d="M51.70 174.3 H52.45 L52.45 173.2 H53.20 L53.20 173.7 H53.95 L53.95 175.9 H54.70 L54.70 173.8 H55.45 L55.45 174.7 H56.20 L56.20 176.5 H56.95 L56.95 177.8 H57.70 L57.70 178.6 H58.45 L58.45 176.9 H59.20 L59.20 179.6 H59.95 L59.95 177.0 H60.70 L60.70 176.9 H61.45 L61.45 179.2 H62.20 L62.20 179.5 H62.95 L62.95 179.4 H63.70 L63.70 179.4 H64.45 L64.45 179.7 H65.20 L65.20 179.8 H65.95 L65.95 178.4 H66.70 L66.70 180.1 H67.45 L67.45 179.4 H68.20 L68.20 179.2 H68.95 L68.95 176.9 H69.70 L69.70 175.7 H70.45 L70.45 176.9 H71.20 L71.20 177.6 H71.95 L71.95 177.8 H72.70 L72.70 177.2 H73.45 L73.45 175.3 H74.20 L74.20 176.4 H74.95 L74.95 174.0 H75.70 L75.70 173.5 H76.45 L76.45 174.4 H77.20 L77.20 174.1 H77.95 L77.95 174.2 H78.70 L78.70 173.4 H79.45 L79.45 172.8 H80.20 L80.20 172.4 H80.95 L80.95 171.6 H81.70 L81.70 171.0 H82.45 L82.45 168.5 H83.20 L83.20 168.2 H83.95 L83.95 169.3 H84.70 L84.70 168.9 H85.45 L85.45 169.6 H86.20 L86.20 169.3 H86.95 L86.95 170.1 H87.70 L87.70 169.4 H88.45 L88.45 170.6 H89.20 L89.20 171.1 H89.95 L89.95 171.7 H90.70 L90.70 172.0 H91.45 L91.45 171.3 H92.20 L92.20 173.2 H92.95 L92.95 171.7 H93.70 L93.70 173.0 H94.45 L94.45 171.9 H95.20 L95.20 171.7 H95.95 L95.95 172.1 H96.70 L96.70 170.7 H97.45 L97.45 172.0 H98.20 L98.20 172.2 H98.95 L98.95 172.1 H99.70 L99.70 172.0 H100.45 L100.45 171.5 H101.20 L101.20 167.7 H101.95 L101.95 166.6 H102.70 L102.70 165.0 H103.45 L103.45 163.1 H104.20 L104.20 158.4 H104.95 L104.95 154.8 H105.70 L105.70 150.2 H106.45 L106.45 145.5 H107.20 L107.20 141.3 H107.95 L107.95 137.2 H108.70 L108.70 134.8 H109.45 L109.45 131.9 H110.20 L110.20 129.0 H110.95 L110.95 125.8 H111.70 L111.70 123.5 H112.45 L112.45 121.9 H113.20 L113.20 120.0 H113.95 L113.95 119.1 H114.70 L114.70 118.6 H115.45 L115.45 115.7 H116.20 L116.20 117.4 H116.95 L116.95 116.5 H117.70 L117.70 113.6 H118.45 L118.45 115.3 H119.20 L119.20 114.9 H119.95 L119.95 112.7 H120.70 L120.70 111.8 H121.45 L121.45 111.5 H122.20 L122.20 112.3 H122.95 L122.95 109.2 H123.70 L123.70 109.8 H124.45 L124.45 107.8 H125.20 L125.20 104.9 H125.95 L125.95 102.5 H126.70 L126.70 99.9 H127.45 L127.45 96.8 H128.20 L128.20 94.1 H128.95 L128.95 92.8 H129.70 L129.70 90.9 H130.45 L130.45 88.2 H131.20 L131.20 87.1 H131.95 L131.95 85.3 H132.70 L132.70 83.4 H133.45 L133.45 82.2 H134.20 L134.20 79.5 H134.95 L134.95 79.8 H135.70 L135.70 81.9 H136.45 L136.45 82.4 H137.20 L137.20 84.0 H137.95 L137.95 86.0 H138.70 L138.70 88.6 H139.45 L139.45 91.2 H140.20 L140.20 93.8 H140.95 L140.95 96.1 H141.70 L141.70 97.4 H142.45 L142.45 101.0 H143.20 L143.20 103.9 H143.95 L143.95 105.8 H144.70 L144.70 108.7 H145.45 L145.45 111.5 H146.20 L146.20 114.2 H146.95 L146.95 115.2 H147.70 L147.70 117.4 H148.45 L148.45 120.1 H149.20 L149.20 123.1 H149.95 L149.95 125.5 H150.70 L150.70 128.2 H151.45 L151.45 130.5 H152.20 L152.20 133.6 H152.95 L152.95 134.7 H153.70 L153.70 138.4 H154.45 L154.45 139.5 H155.20 L155.20 142.7 H155.95 L155.95 144.9 H156.70 L156.70 147.0 H157.45 L157.45 149.1 H158.20 L158.20 150.6 H158.95 L158.95 153.3 H159.70 L159.70 156.2 H160.45 L160.45 157.8 H161.20 L161.20 159.5 H161.95 L161.95 162.8 H162.70 L162.70 165.2 H163.45 L163.45 165.9 H164.20 L164.20 169.2 H164.95 L164.95 170.8 H165.70 L165.70 172.0 H166.45 L166.45 173.3 H167.20 L167.20 173.4 H167.95 L167.95 174.5 H168.70 L168.70 172.4 H169.45 L169.45 175.6 H170.20 L170.20 176.2 H170.95 L170.95 177.2 H171.70 L171.70 177.6 H172.45 L172.45 178.5 H173.20 L173.20 176.6 H173.95 L173.95 177.5 H174.70 L174.70 177.7 H175.45 L175.45 178.4 H176.20 L176.20 177.2 H176.95 L176.95 178.8 H177.70 L177.70 178.5 H178.45 L178.45 177.1 H179.20 L179.20 176.6 H179.95 L179.95 179.3 H180.70 L180.70 179.3 H181.45 L181.45 176.9 H182.20 L182.20 179.4 H182.95 L182.95 176.8 H183.70 L183.70 178.6 H184.45 L184.45 179.3 H185.20 L185.20 178.7 H185.95 L185.95 178.5 H186.70 L186.70 176.2 H187.45 L187.45 177.1 H188.20 L188.20 176.5 H188.95 L188.95 175.8 H189.70 L189.70 173.8 H190.45 L190.45 172.5 H191.20 L191.20 172.6 H191.95 L191.95 173.1 H192.70 L192.70 172.4 H193.45 L193.45 171.9 H194.20 L194.20 170.0 H194.95 L194.95 171.5 H195.70 L195.70 169.8 H196.45 L196.45 171.1 H197.20 L197.20 170.8 H197.95 L197.95 170.7 H198.70 L198.70 170.4 H199.45 L199.45 169.8 H200.20 L200.20 170.2 H200.95 L200.95 170.1 H201.70 L201.70 170.2 H202.45 L202.45 170.7 H203.20 L203.20 168.4 H203.95 L203.95 169.6 H204.70 L204.70 172.1 H205.45 L205.45 169.3 H206.20 L206.20 172.3 H206.95 L206.95 170.4 H207.70 L207.70 171.3 H208.45 L208.45 169.7 H209.20 L209.20 169.3 H209.95 L209.95 171.0 H210.70 L210.70 172.9 H211.45 L211.45 173.9 H212.20 L212.20 170.7 H212.95 L212.95 172.3 H213.70 L213.70 170.4 H214.45 L214.45 168.2 H215.20 L215.20 166.5 H215.95 L215.95 165.4 H216.70 L216.70 163.4 H217.45 L217.45 159.8 H218.20 L218.20 155.3 H218.95 L218.95 150.2 H219.70 L219.70 145.5 H220.45 L220.45 141.5 H221.20 L221.20 137.7 H221.95 L221.95 133.3 H222.70 L222.70 130.3 H223.45 L223.45 128.9 H224.20 L224.20 126.4 H224.95 L224.95 124.1 H225.70 L225.70 121.6 H226.45 L226.45 119.7 H227.20 L227.20 119.3 H227.95 L227.95 118.4 H228.70 L228.70 117.0 H229.45 L229.45 114.7 H230.20 L230.20 115.9 H230.95 L230.95 115.9 H231.70 L231.70 115.8 H232.45 L232.45 115.5 H233.20 L233.20 112.1 H233.95 L233.95 114.7 H234.70 L234.70 113.8 H235.45 L235.45 112.7 H236.20 L236.20 111.7 H236.95 L236.95 108.7 H237.70 L237.70 107.4 H238.45 L238.45 106.8 H239.20 L239.20 103.8 H239.95 L239.95 103.1 H240.70 L240.70 101.2 H241.45 L241.45 98.0 H242.20 L242.20 97.5 H242.95 L242.95 96.0 H243.70 L243.70 94.6 H244.45 L244.45 91.5 H245.20 L245.20 91.9 H245.95 L245.95 89.2 H246.70 L246.70 89.4 H247.45 L247.45 89.8 H248.20 L248.20 88.1 H248.95 L248.95 89.5 H249.70 L249.70 89.3 H250.45 L250.45 90.6 H251.20 L251.20 91.7 H251.95 L251.95 93.8 H252.70 L252.70 95.9 H253.45 L253.45 97.5 H254.20 L254.20 99.1 H254.95 L254.95 100.8 H255.70 L255.70 102.9 H256.45 L256.45 105.0 H257.20 L257.20 107.0 H257.95 L257.95 108.3 H258.70 L258.70 110.3 H259.45 L259.45 112.1 H260.20 L260.20 115.3 H260.95 L260.95 118.1 H261.70 L261.70 120.7 H262.45 L262.45 123.0 H263.20 L263.20 126.2 H263.95 L263.95 128.0 H264.70 L264.70 129.3 H265.45 L265.45 131.7 H266.20 L266.20 135.1 H266.95 L266.95 137.1 H267.70 L267.70 140.3 H268.45 L268.45 142.9 H269.20 L269.20 145.1 H269.95 L269.95 147.6 H270.70 L270.70 149.4 H271.45 L271.45 151.7 H272.20 L272.20 154.3 H272.95 L272.95 156.0 H273.70 L273.70 158.2 H274.45 L274.45 160.4 H275.20 L275.20 162.4 H275.95 L275.95 163.8 H276.70 L276.70 166.0 H277.45 L277.45 168.3 H278.20 L278.20 170.3 H278.95 L278.95 169.7 H279.70 L279.70 172.6 H280.45 L280.45 173.8 H281.20 L281.20 174.9 H281.95 L281.95 175.5 H282.70 L282.70 174.3 H283.45 L283.45 174.4 H284.20 L284.20 175.3 H284.95 L284.95 176.1 H285.70 L285.70 175.8 H286.45 L286.45 178.4 H287.20 L287.20 179.1 H287.95 L287.95 179.6 H288.70 L288.70 179.2 H289.45 L289.45 179.7 H290.20 L290.20 179.7 H290.95 L290.95 176.4 H291.70 L291.70 179.5 H292.45 L292.45 180.0 H293.20 L293.20 180.0 H293.95 L293.95 178.1 H294.70 L294.70 179.2 H295.45 L295.45 179.3 H296.20 L296.20 178.0 H296.95 L296.95 178.3 H297.70 L297.70 176.3 H298.45 L298.45 177.8 H299.20 L299.20 175.4 H299.95 L299.95 176.3 H300.70 L300.70 175.7 H301.45 L301.45 176.2 H302.20 L302.20 175.4 H302.95 L302.95 174.6 H303.70 L303.70 171.9 H304.45 L304.45 174.1 H305.20 L305.20 171.1 H305.95 L305.95 172.5 H306.70 L306.70 171.5 H307.45 L307.45 169.8 H308.20 L308.20 168.2 H308.95 L308.95 170.8 H309.70 L309.70 170.4 H310.45 L310.45 170.7 H311.20 L311.20 168.8 H311.95 L311.95 170.9 H312.70 L312.70 171.0 H313.45 L313.45 170.6 H314.20 L314.20 171.0 H314.95 L314.95 169.0 H315.70 L315.70 170.8 H316.45 L316.45 169.3 H317.20 L317.20 172.2 H317.95 L317.95 172.0 H318.70 L318.70 169.8 H319.45 L319.45 171.9 H320.20 L320.20 171.6 H320.95 L320.95 171.5 H321.70 L321.70 169.3 H322.45 L322.45 171.7 H323.20 L323.20 171.7 H323.95 L323.95 172.0 H324.70 L324.70 171.8 H325.45 L325.45 173.0 H326.20 L326.20 173.5 H326.95 L326.95 171.7 H327.70 L327.70 169.5 H328.45 L328.45 165.9 H329.20 L329.20 164.3 H329.95 L329.95 162.8 H330.70 L330.70 160.1 H331.45 L331.45 155.4 H332.20 L332.20 150.0 H332.95 L332.95 145.8 H333.70 L333.70 141.3 H334.45 L334.45 138.5 H335.20 L335.20 135.3 H335.95 L335.95 131.4 H336.70 L336.70 129.8 H337.45 L337.45 126.1 H338.20 L338.20 124.5 H338.95 L338.95 122.4 H339.70 L339.70 119.6 H340.45 L340.45 119.3 H341.20 L341.20 118.7 H341.95 L341.95 118.5 H342.70 L342.70 118.0 H343.45 L343.45 116.9 H344.20 L344.20 115.1 H344.95 L344.95 114.6 H345.70 L345.70 113.8 H346.45 L346.45 113.7 H347.20 L347.20 113.2 H347.95 L347.95 111.0 H348.70 L348.70 111.4 H349.45 L349.45 111.3 H350.20 L350.20 109.6 H350.95 L350.95 106.9 H351.70 L351.70 105.9 H352.45 L352.45 104.2 H353.20 L353.20 100.5 H353.95 L353.95 99.9 H354.70 L354.70 96.6 H355.45 L355.45 95.2 H356.20 L356.20 94.5 H356.95 L356.95 92.4 H357.70 L357.70 89.9 H358.45 L358.45 88.8 H359.20 L359.20 88.0 H359.95 L359.95 86.2 H360.70 L360.70 86.4 H361.45 L361.45 83.8 H362.20 L362.20 86.3 H362.95 L362.95 86.6 H363.70 L363.70 88.1 H364.45 L364.45 89.1 H365.20 L365.20 91.6 H365.95 L365.95 93.9 H366.70 L366.70 96.2 H367.45 L367.45 98.3 H368.20 L368.20 100.3 H368.95 L368.95 102.3 H369.70 L369.70 104.3 H370.45 L370.45 106.4 H371.20 L371.20 108.6 H371.95 L371.95 110.9 H372.70 L372.70 112.8 H373.45 L373.45 116.0 H374.20 L374.20 117.2 H374.95 L374.95 120.8 H375.70 L375.70 123.4 H376.45 L376.45 125.0 H377.20 L377.20 128.0 H377.95 L377.95 131.0 H378.70 L378.70 133.5 H379.45 L379.45 134.9 H380.20 L380.20 138.1 H380.95 L380.95 140.2 H381.70 L381.70 142.1 H382.45 L382.45 144.5 H383.20 L383.20 146.2 H383.95 L383.95 148.7 H384.70 L384.70 151.5 H385.45 L385.45 153.7 H386.20 L386.20 156.0 H386.95 L386.95 158.3 H387.70 L387.70 159.6 H388.45 L388.45 161.0 H389.20 L389.20 164.4 H389.95 L389.95 167.2 H390.70 L390.70 169.1 H391.45 L391.45 171.0 H392.20 L392.20 172.4 H392.95 L392.95 171.1 H393.70 L393.70 174.5 H394.45 L394.45 172.5 H395.20 L395.20 174.8 H395.95 L395.95 175.8 H396.70 L396.70 176.7 H397.45 L397.45 177.1 H398.20 L398.20 175.4 H398.95 L398.95 175.9 H399.70 L399.70 178.4 H400.45 L400.45 177.2 H401.20 L401.20 179.4 H401.95 L401.95 177.8 H402.70 L402.70 180.4 H403.45 L403.45 179.2 H404.20 L404.20 177.6 H404.95 L404.95 179.0 H405.70 L405.70 177.5 H406.45 L406.45 179.1 H407.20 L407.20 176.6 H407.95 L407.95 179.0 H408.70 L408.70 179.1 H409.45 L409.45 179.5 H410.20 L410.20 177.0 H410.95 L410.95 177.2 H411.70 L411.70 176.9 H412.45 L412.45 178.3 H413.20 L413.20 177.8 H413.95 L413.95 176.9 H414.70 L414.70 176.1 H415.45 L415.45 175.4 H416.20 L416.20 174.7 H416.95 L416.95 173.4 H417.70 L417.70 172.7 H418.45 L418.45 172.8 H419.20 L419.20 170.7 H419.95 L419.95 171.1 H420.70 L420.70 168.8 H421.45 L421.45 170.8 H422.20 L422.20 170.2 H422.95 L422.95 169.4 H423.70 L423.70 169.2 H424.45 L424.45 169.5 H425.20 L425.20 169.2 H425.95 L425.95 170.0 H426.70 L426.70 170.7 H427.45 L427.45 171.2 H428.20 L428.20 169.2 H428.95 L428.95 171.4 H429.70 L429.70 171.9 H430.45 L430.45 171.6 H431.20 L431.20 171.0 H431.95 L431.95 172.0 H432.70 L432.70 172.0 H433.45 L433.45 171.9 H434.20 L434.20 171.5 H434.95 L434.95 171.9 H435.70 L435.70 171.9 H436.45 L436.45 169.7 H437.20 L437.20 172.1 H437.95 L437.95 172.8 H438.70 L438.70 172.8 H439.45 L439.45 170.4 H440.20 L440.20 171.8 H440.95 L440.95 169.5 H441.70 L441.70 167.0 H442.45 L442.45 164.5 H443.20 L443.20 162.7 H443.95 L443.95 160.4 H444.70 L444.70 155.8 H445.45 L445.45 150.6 H446.20 L446.20 146.0 H446.95 L446.95 142.0 H447.70 L447.70 137.9 H448.45 L448.45 135.2 H449.20 L449.20 131.1 H449.95 L449.95 128.3 H450.70 L450.70 126.2 H451.45 L451.45 123.8 H452.20 L452.20 122.0 H452.95 L452.95 119.4 H453.70 L453.70 118.6 H454.45 L454.45 115.8 H455.20 L455.20 117.3 H455.95 L455.95 116.5 H456.70 L456.70 114.7 H457.45 L457.45 113.5 H458.20 L458.20 114.1 H458.95 L458.95 113.9 H459.70 L459.70 114.2 H460.45 L460.45 113.6 H461.20 L461.20 113.2 H461.95 L461.95 112.2 H462.70 L462.70 109.1 H463.45 L463.45 109.3 H464.20 L464.20 107.9 H464.95 L464.95 104.7 H465.70 L465.70 103.8 H466.45 L466.45 101.4 H467.20 L467.20 98.1 H467.95 L467.95 96.5 H468.70 L468.70 93.7 H469.45 L469.45 92.7 H470.20 L470.20 90.5 H470.95 L470.95 87.4 H471.70 L471.70 86.7 H472.45 L472.45 84.9 H473.20 L473.20 83.8 H473.95 L473.95 82.3 H474.70 L474.70 80.5 H475.45 L475.45 81.3 H476.20 L476.20 83.9 H476.95 L476.95 83.7 H477.70 L477.70 86.8 H478.45 L478.45 89.6 H479.20 L479.20 90.8 H479.95 L479.95 93.2 H480.70 L480.70 95.9 H481.45 L481.45 98.8 H482.20 L482.20 99.8 H482.95 L482.95 103.6 H483.70 L483.70 105.5 H484.45 L484.45 108.8 H485.20 L485.20 110.2 H485.95 L485.95 113.4 H486.70 L486.70 115.8 H487.45 L487.45 118.2 H488.20 L488.20 120.3 H488.95 L488.95 123.3 H489.70 L489.70 124.5 H490.45 L490.45 128.3 H491.20 L491.20 130.8 H491.95 L491.95 132.2 H492.70 L492.70 134.9 H493.45 L493.45 137.6 H494.20 L494.20 140.7 H494.95 L494.95 141.8 H495.70 L495.70 144.9 H496.45 L496.45 146.6 H497.20 L497.20 149.5 H497.95 L497.95 150.5 H498.70 L498.70 154.1 H499.45 L499.45 156.0 H500.20 L500.20 158.0 H500.95 L500.95 160.6 H501.70 L501.70 162.6 H502.45 L502.45 163.8 H503.20 L503.20 165.6 H503.95 L503.95 169.4 H504.70 L504.70 170.6 H505.45 L505.45 170.7 H506.20 L506.20 172.6 H506.95 L506.95 172.7 H507.70 L507.70 173.4 H508.45 L508.45 173.9 H509.20 L509.20 173.9 H509.95 L509.95 177.0 H510.70 L510.70 177.4 H511.45 L511.45 177.2 H512.20 L512.20 178.0 H512.95 L512.95 178.6 H513.70 L513.70 175.9 H514.45 L514.45 179.4 H515.20 L515.20 179.4 H515.95 L515.95 179.2 H516.70 L516.70 177.8 H517.45 L517.45 179.5 H518.20 L518.20 179.3 H518.95 L518.95 180.2 H519.70 L519.70 179.4 H520.45 L520.45 178.2 H521.20 L521.20 179.5 H521.95 L521.95 179.1 H522.70 L522.70 179.2 H523.45 L523.45 177.6 H524.20 L524.20 177.7 H524.95 L524.95 176.0 H525.70 L525.70 175.0 H526.45 L526.45 176.6 H527.20 L527.20 174.1 H527.95 L527.95 173.8 H528.70 L528.70 172.9 H529.45 L529.45 174.0 H530.20 L530.20 172.4 H530.95 L530.95 172.9 H531.70 L531.70 172.2 H532.45 L532.45 172.0 H533.20 L533.20 171.9 H533.95 L533.95 172.4 H534.70 L534.70 171.6 H535.45 L535.45 169.1 H536.20 L536.20 168.2 H536.95 L536.95 170.7 H537.70 L537.70 170.1 H538.45 L538.45 167.5 H539.20 L539.20 170.9 H539.95 L539.95 169.6 H540.70 L540.70 171.1 H541.45 L541.45 169.7 H542.20 L542.20 170.3 H542.95 L542.95 169.6 H543.70 L543.70 168.7 H544.45 L544.45 169.8 H545.20 L545.20 168.0 H545.95 L545.95 168.3 H546.70 L546.70 170.1 H547.45 L547.45 168.4 H548.20 L548.20 171.2 H548.95 L548.95 171.6 H549.70 L549.70 169.7 H550.45 L550.45 172.4 H551.20 L551.20 173.2 H551.95 L551.95 171.3 H552.70 L552.70 173.8 H553.45 L553.45 172.4 H554.20 L554.20 168.6 H554.95 L554.95 166.4 H555.70 L555.70 165.1 H556.45 L556.45 163.1 H557.20 L557.20 159.3 H557.95 L557.95 156.0 H558.70 L558.70 150.3 H559.45 L559.45 145.7 H560.20 L560.20 141.5 H560.95 L560.95 138.7 H561.70 L561.70 135.0 H562.45 L562.45 132.0 H563.20 L563.20 129.0 H563.95 L563.95 126.5 H564.70 L564.70 123.6 H565.45 L565.45 121.6 H566.20 L566.20 119.6 H566.95 L566.95 118.3 H567.70 L567.70 117.5 H568.45 L568.45 117.4 H569.20 L569.20 116.9 H569.95 L569.95 114.4 H570.70 L570.70 116.3 H571.45 L571.45 115.9 H572.20 L572.20 115.6 H572.95 L572.95 114.4 H573.70 L573.70 114.1 H574.45 L574.45 112.8 H575.20 L575.20 112.0 H575.95 L575.95 109.5 H576.70 L576.70 109.4 H577.45 L577.45 108.7 H578.20 L578.20 106.4 H578.95 L578.95 103.4 H579.70 L579.70 102.0 H580.45 L580.45 99.8 H581.20 L581.20 96.9 H581.95 L581.95 95.6 H582.70 L582.70 93.9 H583.45 L583.45 92.1 H584.20 L584.20 90.7 H584.95 L584.95 88.3 H585.70 L585.70 87.2 H586.45 L586.45 85.5 H587.20 L587.20 86.8 H587.95 L587.95 86.7 H588.70 L588.70 86.7 H589.45 L589.45 86.7 H590.20 L590.20 87.2 H590.95 L590.95 87.9 H591.70 L591.70 90.5 H592.45 L592.45 92.2 H593.20 L593.20 94.9 H593.95 L593.95 97.1 H594.70 L594.70 99.4 H595.45 L595.45 101.6 H596.20 L596.20 104.0 H596.95 L596.95 106.5 H597.70 L597.70 109.1 H598.45 L598.45 111.2 H599.20 L599.20 113.4 H599.95 L599.95 114.7 H600.70 L600.70 117.9 H601.45 L601.45 119.5 H602.20 L602.20 121.9 H602.95 L602.95 125.1 H603.70 L603.70 126.5 H604.45 L604.45 130.1 H605.20 L605.20 131.9 H605.95 L605.95 135.0 H606.70 L606.70 136.6 H607.45 L607.45 139.7 H608.20 L608.20 140.4 H608.95 L608.95 143.9 H609.70 L609.70 145.3 H610.45 L610.45 148.6 H611.20 L611.20 150.8 H611.95 L611.95 153.2 H612.70 L612.70 155.5 H613.45 L613.45 158.0 H614.20 L614.20 160.3 H614.95 L614.95 161.4 H615.70 L615.70 164.8 H616.45 L616.45 166.0 H617.20 L617.20 169.4 H617.95 L617.95 171.1 H618.70 L618.70 171.3 H619.45 L619.45 173.4 H619.50 L619.50 176.8 H619.45 L619.45 176.8 H618.70 L618.70 176.1 H617.95 L617.95 175.3 H617.20 L617.20 173.8 H616.45 L616.45 172.5 H615.70 L615.70 171.5 H614.95 L614.95 168.5 H614.20 L614.20 167.0 H613.45 L613.45 164.0 H612.70 L612.70 162.7 H611.95 L611.95 158.9 H611.20 L611.20 156.4 H610.45 L610.45 155.5 H609.70 L609.70 151.7 H608.95 L608.95 149.6 H608.20 L608.20 148.4 H607.45 L607.45 145.8 H606.70 L606.70 144.3 H605.95 L605.95 141.6 H605.20 L605.20 138.2 H604.45 L604.45 135.8 H603.70 L603.70 134.4 H602.95 L602.95 131.0 H602.20 L602.20 128.4 H601.45 L601.45 125.9 H600.70 L600.70 123.7 H599.95 L599.95 121.5 H599.20 L599.20 118.7 H598.45 L598.45 116.7 H597.70 L597.70 115.7 H596.95 L596.95 113.2 H596.20 L596.20 109.7 H595.45 L595.45 108.0 H594.70 L594.70 105.6 H593.95 L593.95 102.5 H593.20 L593.20 101.0 H592.45 L592.45 98.2 H591.70 L591.70 95.8 H590.95 L590.95 94.6 H590.20 L590.20 91.7 H589.45 L589.45 91.0 H588.70 L588.70 91.6 H587.95 L587.95 91.7 H587.20 L587.20 92.3 H586.45 L586.45 93.5 H585.70 L585.70 95.6 H584.95 L584.95 98.2 H584.20 L584.20 99.6 H583.45 L583.45 102.2 H582.70 L582.70 103.7 H581.95 L581.95 105.9 H581.20 L581.20 107.6 H580.45 L580.45 111.2 H579.70 L579.70 112.5 H578.95 L578.95 113.6 H578.20 L578.20 114.8 H577.45 L577.45 115.7 H576.70 L576.70 116.7 H575.95 L575.95 117.3 H575.20 L575.20 120.0 H574.45 L574.45 118.4 H573.70 L573.70 119.0 H572.95 L572.95 119.2 H572.20 L572.20 119.4 H571.45 L571.45 122.4 H570.70 L570.70 120.2 H569.95 L569.95 120.8 H569.20 L569.20 121.6 H568.45 L568.45 123.0 H567.70 L567.70 125.6 H566.95 L566.95 127.7 H566.20 L566.20 130.1 H565.45 L565.45 132.6 H564.70 L564.70 135.5 H563.95 L563.95 139.4 H563.20 L563.20 142.1 H562.45 L562.45 146.4 H561.70 L561.70 150.6 H560.95 L560.95 155.8 H560.20 L560.20 160.3 H559.45 L559.45 164.0 H558.70 L558.70 166.5 H557.95 L557.95 168.2 H557.20 L557.20 170.4 H556.45 L556.45 173.7 H555.70 L555.70 175.6 H554.95 L554.95 177.0 H554.20 L554.20 177.2 H553.45 L553.45 177.5 H552.70 L552.70 177.4 H551.95 L551.95 177.4 H551.20 L551.20 176.2 H550.45 L550.45 177.7 H549.70 L549.70 175.4 H548.95 L548.95 177.7 H548.20 L548.20 174.5 H547.45 L547.45 174.1 H546.70 L546.70 173.9 H545.95 L545.95 174.4 H545.20 L545.20 175.8 H544.45 L544.45 174.3 H543.70 L543.70 174.3 H542.95 L542.95 176.8 H542.20 L542.20 173.9 H541.45 L541.45 175.8 H540.70 L540.70 177.1 H539.95 L539.95 173.9 H539.20 L539.20 174.0 H538.45 L538.45 173.8 H537.70 L537.70 175.5 H536.95 L536.95 174.6 H536.20 L536.20 175.1 H535.45 L535.45 177.9 H534.70 L534.70 177.2 H533.95 L533.95 178.3 H533.20 L533.20 177.8 H532.45 L532.45 176.7 H531.70 L531.70 177.4 H530.95 L530.95 178.5 H530.20 L530.20 178.9 H529.45 L529.45 179.3 H528.70 L528.70 179.7 H527.95 L527.95 180.9 H527.20 L527.20 181.0 H526.45 L526.45 183.3 H525.70 L525.70 184.6 H524.95 L524.95 181.9 H524.20 L524.20 182.2 H523.45 L523.45 182.7 H522.70 L522.70 185.3 H521.95 L521.95 182.9 H521.20 L521.20 183.4 H520.45 L520.45 183.5 H519.70 L519.70 183.9 H518.95 L518.95 183.5 H518.20 L518.20 184.0 H517.45 L517.45 184.9 H516.70 L516.70 184.3 H515.95 L515.95 183.7 H515.20 L515.20 183.8 H514.45 L514.45 183.6 H513.70 L513.70 181.7 H512.95 L512.95 181.8 H512.20 L512.20 181.0 H511.45 L511.45 181.6 H510.70 L510.70 180.5 H509.95 L509.95 180.0 H509.20 L509.20 179.7 H508.45 L508.45 181.7 H507.70 L507.70 179.4 H506.95 L506.95 179.3 H506.20 L506.20 176.5 H505.45 L505.45 176.2 H504.70 L504.70 176.6 H503.95 L503.95 174.9 H503.20 L503.20 172.2 H502.45 L502.45 170.5 H501.70 L501.70 168.3 H500.95 L500.95 166.3 H500.20 L500.20 163.9 H499.45 L499.45 161.6 H498.70 L498.70 159.5 H497.95 L497.95 157.3 H497.20 L497.20 154.9 H496.45 L496.45 152.7 H495.70 L495.70 150.9 H494.95 L494.95 148.5 H494.20 L494.20 147.4 H493.45 L493.45 143.9 H492.70 L492.70 142.1 H491.95 L491.95 140.5 H491.20 L491.20 136.9 H490.45 L490.45 134.2 H489.70 L489.70 131.7 H488.95 L488.95 130.0 H488.20 L488.20 126.8 H487.45 L487.45 124.3 H486.70 L486.70 121.6 H485.95 L485.95 120.2 H485.20 L485.20 117.7 H484.45 L484.45 115.4 H483.70 L483.70 112.0 H482.95 L482.95 109.6 H482.20 L482.20 107.3 H481.45 L481.45 104.7 H480.70 L480.70 103.6 H479.95 L479.95 99.9 H479.20 L479.20 97.6 H478.45 L478.45 96.2 H477.70 L477.70 93.4 H476.95 L476.95 90.5 H476.20 L476.20 89.8 H475.45 L475.45 86.9 H474.70 L474.70 88.6 H473.95 L473.95 90.0 H473.20 L473.20 92.3 H472.45 L472.45 95.2 H471.70 L471.70 97.1 H470.95 L470.95 99.5 H470.20 L470.20 101.6 H469.45 L469.45 102.6 H468.70 L468.70 105.7 H467.95 L467.95 107.1 H467.20 L467.20 109.6 H466.45 L466.45 112.1 H465.70 L465.70 113.5 H464.95 L464.95 116.0 H464.20 L464.20 116.9 H463.45 L463.45 116.0 H462.70 L462.70 116.6 H461.95 L461.95 117.3 H461.20 L461.20 117.7 H460.45 L460.45 120.6 H459.70 L459.70 120.5 H458.95 L458.95 118.9 H458.20 L458.20 119.6 H457.45 L457.45 121.6 H456.70 L456.70 121.4 H455.95 L455.95 121.6 H455.20 L455.20 125.0 H454.45 L454.45 125.5 H453.70 L453.70 128.9 H452.95 L452.95 130.4 H452.20 L452.20 132.9 H451.45 L451.45 135.7 H450.70 L450.70 138.9 H449.95 L449.95 142.1 H449.20 L449.20 145.8 H448.45 L448.45 149.8 H447.70 L447.70 155.2 H446.95 L446.95 160.4 H446.20 L446.20 164.0 H445.45 L445.45 167.6 H444.70 L444.70 168.7 H443.95 L443.95 170.4 H443.20 L443.20 173.1 H442.45 L442.45 175.1 H441.70 L441.70 176.5 H440.95 L440.95 177.6 H440.20 L440.20 177.9 H439.45 L439.45 178.5 H438.70 L438.70 176.4 H437.95 L437.95 175.7 H437.20 L437.20 175.7 H436.45 L436.45 176.5 H435.70 L435.70 175.6 H434.95 L434.95 174.9 H434.20 L434.20 176.2 H433.45 L433.45 175.4 H432.70 L432.70 175.1 H431.95 L431.95 176.9 H431.20 L431.20 176.8 H430.45 L430.45 176.0 H429.70 L429.70 174.9 H428.95 L428.95 174.4 H428.20 L428.20 174.8 H427.45 L427.45 177.2 H426.70 L426.70 176.2 H425.95 L425.95 173.4 H425.20 L425.20 174.0 H424.45 L424.45 173.0 H423.70 L423.70 176.0 H422.95 L422.95 174.0 H422.20 L422.20 175.5 H421.45 L421.45 175.3 H420.70 L420.70 177.4 H419.95 L419.95 178.3 H419.20 L419.20 177.0 H418.45 L418.45 179.0 H417.70 L417.70 178.1 H416.95 L416.95 180.4 H416.20 L416.20 181.1 H415.45 L415.45 182.3 H414.70 L414.70 181.9 H413.95 L413.95 181.9 H413.20 L413.20 182.5 H412.45 L412.45 182.9 H411.70 L411.70 183.0 H410.95 L410.95 183.0 H410.20 L410.20 184.3 H409.45 L409.45 182.5 H408.70 L408.70 182.7 H407.95 L407.95 182.3 H407.20 L407.20 185.2 H406.45 L406.45 182.4 H405.70 L405.70 182.6 H404.95 L404.95 185.0 H404.20 L404.20 183.2 H403.45 L403.45 183.3 H402.70 L402.70 183.7 H401.95 L401.95 183.9 H401.20 L401.20 184.8 H400.45 L400.45 184.4 H399.70 L399.70 184.0 H398.95 L398.95 181.6 H398.20 L398.20 181.0 H397.45 L397.45 180.6 H396.70 L396.70 181.1 H395.95 L395.95 179.2 H395.20 L395.20 179.0 H394.45 L394.45 178.3 H393.70 L393.70 177.8 H392.95 L392.95 179.0 H392.20 L392.20 177.1 H391.45 L391.45 175.3 H390.70 L390.70 173.8 H389.95 L389.95 172.3 H389.20 L389.20 170.3 H388.45 L388.45 168.1 H387.70 L387.70 165.9 H386.95 L386.95 163.7 H386.20 L386.20 161.4 H385.45 L385.45 160.5 H384.70 L384.70 157.1 H383.95 L383.95 155.6 H383.20 L383.20 152.7 H382.45 L382.45 150.4 H381.70 L381.70 148.9 H380.95 L380.95 145.4 H380.20 L380.20 143.3 H379.45 L379.45 142.0 H378.70 L378.70 139.2 H377.95 L377.95 137.1 H377.20 L377.20 134.5 H376.45 L376.45 131.9 H375.70 L375.70 130.4 H374.95 L374.95 127.4 H374.20 L374.20 124.2 H373.45 L373.45 123.0 H372.70 L372.70 120.2 H371.95 L371.95 116.7 H371.20 L371.20 114.2 H370.45 L370.45 111.7 H369.70 L369.70 109.9 H368.95 L368.95 107.4 H368.20 L368.20 106.0 H367.45 L367.45 103.6 H366.70 L366.70 102.6 H365.95 L365.95 100.6 H365.20 L365.20 97.2 H364.45 L364.45 95.8 H363.70 L363.70 92.8 H362.95 L362.95 91.2 H362.20 L362.20 89.7 H361.45 L361.45 92.8 H360.70 L360.70 92.5 H359.95 L359.95 94.0 H359.20 L359.20 95.7 H358.45 L358.45 97.4 H357.70 L357.70 100.6 H356.95 L356.95 102.0 H356.20 L356.20 103.1 H355.45 L355.45 105.0 H354.70 L354.70 107.6 H353.95 L353.95 110.0 H353.20 L353.20 111.9 H352.45 L352.45 113.7 H351.70 L351.70 114.1 H350.95 L350.95 115.4 H350.20 L350.20 117.7 H349.45 L349.45 116.3 H348.70 L348.70 116.4 H347.95 L347.95 117.0 H347.20 L347.20 118.0 H346.45 L346.45 118.8 H345.70 L345.70 120.1 H344.95 L344.95 121.2 H344.20 L344.20 121.2 H343.45 L343.45 121.4 H342.70 L342.70 122.3 H341.95 L341.95 123.5 H341.20 L341.20 126.2 H340.45 L340.45 129.1 H339.70 L339.70 130.5 H338.95 L338.95 133.1 H338.20 L338.20 137.0 H337.45 L337.45 138.9 H336.70 L336.70 142.9 H335.95 L335.95 145.8 H335.20 L335.20 150.0 H334.45 L334.45 155.4 H333.70 L333.70 160.2 H332.95 L332.95 163.8 H332.20 L332.20 166.6 H331.45 L331.45 169.5 H330.70 L330.70 170.2 H329.95 L329.95 173.9 H329.20 L329.20 175.2 H328.45 L328.45 176.5 H327.70 L327.70 177.0 H326.95 L326.95 177.8 H326.20 L326.20 176.5 H325.45 L325.45 176.6 H324.70 L324.70 176.1 H323.95 L323.95 178.0 H323.20 L323.20 175.4 H322.45 L322.45 174.9 H321.70 L321.70 174.6 H320.95 L320.95 176.1 H320.20 L320.20 175.1 H319.45 L319.45 176.9 H318.70 L318.70 175.4 H317.95 L317.95 174.8 H317.20 L317.20 176.3 H316.45 L316.45 176.4 H315.70 L315.70 174.9 H314.95 L314.95 174.4 H314.20 L314.20 174.1 H313.45 L313.45 177.3 H312.70 L312.70 174.5 H311.95 L311.95 174.1 H311.20 L311.20 174.4 H310.45 L310.45 174.9 H309.70 L309.70 173.9 H308.95 L308.95 174.7 H308.20 L308.20 176.1 H307.45 L307.45 177.6 H306.70 L306.70 179.4 H305.95 L305.95 178.0 H305.20 L305.20 179.9 H304.45 L304.45 178.6 H303.70 L303.70 181.1 H302.95 L302.95 179.5 H302.20 L302.20 182.8 H301.45 L301.45 180.6 H300.70 L300.70 180.8 H299.95 L299.95 181.0 H299.20 L299.20 184.3 H298.45 L298.45 181.7 H297.70 L297.70 182.1 H296.95 L296.95 183.0 H296.20 L296.20 183.2 H295.45 L295.45 183.3 H294.70 L294.70 183.3 H293.95 L293.95 183.4 H293.20 L293.20 183.0 H292.45 L292.45 182.6 H291.70 L291.70 182.9 H290.95 L290.95 182.5 H290.20 L290.20 183.2 H289.45 L289.45 184.8 H288.70 L288.70 182.5 H287.95 L287.95 182.6 H287.20 L287.20 182.1 H286.45 L286.45 183.8 H285.70 L285.70 181.2 H284.95 L284.95 180.6 H284.20 L284.20 180.0 H283.45 L283.45 179.8 H282.70 L282.70 179.4 H281.95 L281.95 179.0 H281.20 L281.20 179.6 H280.45 L280.45 179.8 H279.70 L279.70 176.6 H278.95 L278.95 175.5 H278.20 L278.20 174.5 H277.45 L277.45 173.2 H276.70 L276.70 171.9 H275.95 L275.95 170.5 H275.20 L275.20 168.2 H274.45 L274.45 165.7 H273.70 L273.70 163.9 H272.95 L272.95 161.9 H272.20 L272.20 159.8 H271.45 L271.45 157.8 H270.70 L270.70 155.4 H269.95 L269.95 153.1 H269.20 L269.20 151.7 H268.45 L268.45 148.6 H267.70 L267.70 146.5 H266.95 L266.95 144.6 H266.20 L266.20 141.2 H265.45 L265.45 138.6 H264.70 L264.70 137.0 H263.95 L263.95 133.8 H263.20 L263.20 132.9 H262.45 L262.45 129.4 H261.70 L261.70 127.9 H260.95 L260.95 125.3 H260.20 L260.20 121.5 H259.45 L259.45 120.3 H258.70 L258.70 116.7 H257.95 L257.95 114.6 H257.20 L257.20 111.9 H256.45 L256.45 110.2 H255.70 L255.70 108.3 H254.95 L254.95 107.6 H254.20 L254.20 105.9 H253.45 L253.45 102.5 H252.70 L252.70 102.3 H251.95 L251.95 99.2 H251.20 L251.20 98.2 H250.45 L250.45 97.1 H249.70 L249.70 94.0 H248.95 L248.95 95.3 H248.20 L248.20 94.5 H247.45 L247.45 96.5 H246.70 L246.70 96.9 H245.95 L245.95 97.4 H245.20 L245.20 99.0 H244.45 L244.45 100.8 H243.70 L243.70 102.4 H242.95 L242.95 104.4 H242.20 L242.20 106.2 H241.45 L241.45 108.0 H240.70 L240.70 111.7 H239.95 L239.95 113.6 H239.20 L239.20 114.2 H238.45 L238.45 114.6 H237.70 L237.70 115.7 H236.95 L236.95 117.3 H236.20 L236.20 118.4 H235.45 L235.45 117.6 H234.70 L234.70 118.2 H233.95 L233.95 119.3 H233.20 L233.20 118.9 H232.45 L232.45 119.2 H231.70 L231.70 119.3 H230.95 L230.95 120.2 H230.20 L230.20 122.9 H229.45 L229.45 122.5 H228.70 L228.70 123.7 H227.95 L227.95 125.3 H227.20 L227.20 127.5 H226.45 L226.45 129.9 H225.70 L225.70 132.2 H224.95 L224.95 134.9 H224.20 L224.20 138.0 H223.45 L223.45 142.6 H222.70 L222.70 145.4 H221.95 L221.95 149.5 H221.20 L221.20 154.5 H220.45 L220.45 160.2 H219.70 L219.70 164.8 H218.95 L218.95 167.7 H218.20 L218.20 168.3 H217.45 L217.45 171.4 H216.70 L216.70 172.9 H215.95 L215.95 175.1 H215.20 L215.20 176.9 H214.45 L214.45 176.9 H213.70 L213.70 176.5 H212.95 L212.95 177.0 H212.20 L212.20 177.5 H211.45 L211.45 178.9 H210.70 L210.70 177.2 H209.95 L209.95 176.1 H209.20 L209.20 176.6 H208.45 L208.45 174.9 H207.70 L207.70 175.1 H206.95 L206.95 175.2 H206.20 L206.20 176.9 H205.45 L205.45 175.2 H204.70 L204.70 177.4 H203.95 L203.95 175.2 H203.20 L203.20 174.3 H202.45 L202.45 174.8 H201.70 L201.70 175.6 H200.95 L200.95 173.2 H200.20 L200.20 174.1 H199.45 L199.45 174.3 H198.70 L198.70 174.4 H197.95 L197.95 175.2 H197.20 L197.20 174.5 H196.45 L196.45 174.4 H195.70 L195.70 174.8 H194.95 L194.95 176.9 H194.20 L194.20 176.3 H193.45 L193.45 177.0 H192.70 L192.70 177.3 H191.95 L191.95 180.5 H191.20 L191.20 179.3 H190.45 L190.45 180.1 H189.70 L189.70 182.3 H188.95 L188.95 180.8 H188.20 L188.20 182.5 H187.45 L187.45 181.7 H186.70 L186.70 183.3 H185.95 L185.95 183.7 H185.20 L185.20 184.4 H184.45 L184.45 182.4 H183.70 L183.70 182.7 H182.95 L182.95 183.0 H182.20 L182.20 186.0 H181.45 L181.45 182.8 H180.70 L180.70 185.6 H179.95 L179.95 184.4 H179.20 L179.20 182.3 H178.45 L178.45 184.0 H177.70 L177.70 185.0 H176.95 L176.95 181.9 H176.20 L176.20 181.8 H175.45 L175.45 183.4 H174.70 L174.70 182.0 H173.95 L173.95 182.1 H173.20 L173.20 181.9 H172.45 L172.45 181.6 H171.70 L171.70 181.9 H170.95 L170.95 180.7 H170.20 L170.20 179.9 H169.45 L169.45 179.4 H168.70 L168.70 179.2 H167.95 L167.95 177.8 H167.20 L167.20 177.2 H166.45 L166.45 177.8 H165.70 L165.70 178.1 H164.95 L164.95 175.4 H164.20 L164.20 175.5 H163.45 L163.45 174.1 H162.70 L162.70 170.6 H161.95 L161.95 168.5 H161.20 L161.20 166.0 H160.45 L160.45 163.9 H159.70 L159.70 161.7 H158.95 L158.95 160.5 H158.20 L158.20 157.0 H157.45 L157.45 154.6 H156.70 L156.70 152.2 H155.95 L155.95 150.5 H155.20 L155.20 148.2 H154.45 L154.45 147.2 H153.70 L153.70 143.7 H152.95 L152.95 141.7 H152.20 L152.20 140.8 H151.45 L151.45 137.2 H150.70 L150.70 134.3 H149.95 L149.95 131.6 H149.20 L149.20 129.2 H148.45 L148.45 126.6 H147.70 L147.70 124.3 H146.95 L146.95 122.0 H146.20 L146.20 120.0 H145.45 L145.45 117.6 H144.70 L144.70 115.0 H143.95 L143.95 113.6 H143.20 L143.20 109.8 H142.45 L142.45 107.3 H141.70 L141.70 104.6 H140.95 L140.95 101.9 H140.20 L140.20 100.2 H139.45 L139.45 97.3 H138.70 L138.70 94.4 H137.95 L137.95 91.8 H137.20 L137.20 89.2 H136.45 L136.45 88.7 H135.70 L135.70 85.4 H134.95 L134.95 86.7 H134.20 L134.20 88.3 H133.45 L133.45 90.3 H132.70 L132.70 92.5 H131.95 L131.95 94.4 H131.20 L131.20 96.3 H130.45 L130.45 99.7 H129.70 L129.70 101.4 H128.95 L128.95 104.8 H128.20 L128.20 105.9 H127.45 L127.45 109.7 H126.70 L126.70 111.0 H125.95 L125.95 114.3 H125.20 L125.20 115.1 H124.45 L124.45 116.8 H123.70 L123.70 116.2 H122.95 L122.95 116.9 H122.20 L122.20 117.6 H121.45 L121.45 119.1 H120.70 L120.70 119.5 H119.95 L119.95 119.0 H119.20 L119.20 119.9 H118.45 L118.45 120.5 H117.70 L117.70 121.8 H116.95 L116.95 121.3 H116.20 L116.20 122.4 H115.45 L115.45 124.6 H114.70 L114.70 126.6 H113.95 L113.95 128.2 H113.20 L113.20 129.8 H112.45 L112.45 132.5 H111.70 L111.70 135.3 H110.95 L110.95 139.2 H110.20 L110.20 141.8 H109.45 L109.45 146.6 H108.70 L108.70 149.3 H107.95 L107.95 154.2 H107.20 L107.20 160.0 H106.45 L106.45 164.1 H105.70 L105.70 167.3 H104.95 L104.95 168.2 H104.20 L104.20 170.4 H103.45 L103.45 173.0 H102.70 L102.70 174.9 H101.95 L101.95 176.9 H101.20 L101.20 178.2 H100.45 L100.45 177.1 H99.70 L99.70 177.3 H98.95 L98.95 178.9 H98.20 L98.20 176.4 H97.45 L97.45 177.9 H96.70 L96.70 175.9 H95.95 L95.95 176.0 H95.20 L95.20 176.2 H94.45 L94.45 176.1 H93.70 L93.70 176.4 H92.95 L92.95 178.9 H92.20 L92.20 177.8 H91.45 L91.45 176.3 H90.70 L90.70 175.6 H89.95 L89.95 177.1 H89.20 L89.20 174.4 H88.45 L88.45 175.9 H87.70 L87.70 175.1 H86.95 L86.95 172.9 H86.20 L86.20 172.8 H85.45 L85.45 174.8 H84.70 L84.70 173.9 H83.95 L83.95 174.0 H83.20 L83.20 174.3 H82.45 L82.45 175.0 H81.70 L81.70 178.2 H80.95 L80.95 176.3 H80.20 L80.20 176.6 H79.45 L79.45 178.0 H78.70 L78.70 180.2 H77.95 L77.95 178.3 H77.20 L77.20 178.5 H76.45 L76.45 179.0 H75.70 L75.70 182.1 H74.95 L74.95 180.1 H74.20 L74.20 181.6 H73.45 L73.45 181.7 H72.70 L72.70 180.6 H71.95 L71.95 183.9 H71.20 L71.20 181.9 H70.45 L70.45 184.8 H69.70 L69.70 182.6 H68.95 L68.95 182.7 H68.20 L68.20 183.0 H67.45 L67.45 183.0 H66.70 L66.70 185.3 H65.95 L65.95 184.0 H65.20 L65.20 184.6 H64.45 L64.45 183.1 H63.70 L63.70 182.5 H62.95 L62.95 182.7 H62.20 L62.20 182.9 H61.45 L61.45 183.7 H60.70 L60.70 182.4 H59.95 L59.95 182.1 H59.20 L59.20 183.4 H58.45 L58.45 182.8 H57.70 L57.70 182.6 H56.95 L56.95 182.9 H56.20 L56.20 181.1 H55.45 L55.45 180.0 H54.70 L54.70 179.4 H53.95 L53.95 178.8 H53.20 L53.20 178.7 H52.45 L52.45 178.2 H51.70Z" fill="#dcb800"/><path d="M51.7 169.5 h1.8 V178.5 h-1.8Z" fill="#dcb800"/>
<path d="M51.7 381.5 L52.2 382.8 L52.7 383.9 L53.2 385.1 L53.7 386.2 L54.2 387.3 L54.7 388.3 L55.2 389.3 L55.7 390.3 L56.2 391.2 L56.7 392.1 L57.2 393.0 L57.7 393.8 L58.2 394.6 L58.7 395.3 L59.2 396.0 L59.7 396.7 L60.2 397.4 L60.7 398.0 L61.2 398.6 L61.7 399.1 L62.2 399.6 L62.7 400.1 L63.2 400.5 L63.7 401.0 L64.2 401.3 L64.7 401.7 L65.2 402.0 L65.7 402.3 L66.2 402.6 L66.7 402.8 L67.2 403.0 L67.7 403.2 L68.2 403.3 L68.7 403.4 L69.2 403.5 L69.7 403.6 L70.2 403.6 L70.7 403.5 L71.2 403.4 L71.7 403.3 L72.2 403.2 L72.7 403.0 L73.2 402.7 L73.7 402.5 L74.2 402.1 L74.7 401.8 L75.2 401.4 L75.7 400.9 L76.2 400.4 L76.7 399.8 L77.2 399.2 L77.7 398.5 L78.2 397.7 L78.7 396.9 L79.2 396.0 L79.7 395.0 L80.2 394.0 L80.7 392.9 L81.2 391.7 L81.7 390.4 L82.2 389.1 L82.7 387.6 L83.2 386.1 L83.7 384.5 L84.2 382.8 L84.7 381.0 L85.2 379.1 L85.7 377.1 L86.2 375.0 L86.7 372.8 L87.2 370.5 L87.7 368.1 L88.2 365.5 L88.7 362.9 L89.2 360.1 L89.7 357.3 L90.2 354.3 L90.7 351.1 L91.2 347.9 L91.7 344.5 L92.2 341.0 L92.7 337.4 L93.2 333.6 L93.7 329.7 L94.2 325.7 L94.7 321.6 L95.2 317.4 L95.7 313.0 L96.2 308.5 L96.7 303.9 L97.2 299.1 L97.7 294.4 L98.2 289.5 L98.7 284.6 L99.2 279.8 L99.7 274.9 L100.2 270.2 L100.7 265.5 L101.2 260.9 L101.7 256.5 L102.2 252.3 L102.7 248.2 L103.2 244.4 L103.7 240.7 L104.2 237.3 L104.7 234.0 L105.2 230.9 L105.7 227.9 L106.2 225.2 L106.7 222.5 L107.2 220.1 L107.7 217.7 L108.2 215.5 L108.7 213.4 L109.2 211.4 L109.7 209.5 L110.2 207.7 L110.7 206.1 L111.2 204.4 L111.7 202.9 L112.2 201.4 L112.7 200.0 L113.2 198.7 L113.7 197.4 L114.2 196.1 L114.7 194.8 L115.2 193.6 L115.7 192.4 L116.2 191.2 L116.7 190.0 L117.2 188.9 L117.7 187.7 L118.2 186.6 L118.7 185.6 L119.2 184.5 L119.7 183.5 L120.2 182.5 L120.7 181.5 L121.2 180.6 L121.7 179.7 L122.2 178.8 L122.7 178.0 L123.2 177.2 L123.7 176.5 L124.2 175.8 L124.7 175.2 L125.2 175.8 L125.7 178.1 L126.2 180.4 L126.7 182.7 L127.2 185.0 L127.7 187.3 L128.2 189.7 L128.7 192.1 L129.2 194.5 L129.7 196.9 L130.2 199.4 L130.7 202.0 L131.2 204.6 L131.7 207.2 L132.2 210.0 L132.7 212.7 L133.2 215.6 L133.7 218.5 L134.2 221.6 L134.7 224.7 L135.2 227.9 L135.7 231.1 L136.2 234.4 L136.7 237.8 L137.2 241.2 L137.7 244.6 L138.2 248.1 L138.7 251.6 L139.2 255.1 L139.7 258.6 L140.2 262.1 L140.7 265.6 L141.2 269.1 L141.7 272.6 L142.2 276.0 L142.7 279.4 L143.2 282.7 L143.7 286.0 L144.2 289.2 L144.7 292.4 L145.2 295.5 L145.7 298.6 L146.2 301.6 L146.7 304.6 L147.2 307.5 L147.7 310.3 L148.2 313.2 L148.7 315.9 L149.2 318.6 L149.7 321.3 L150.2 323.9 L150.7 326.5 L151.2 329.0 L151.7 331.5 L152.2 333.9 L152.7 336.3 L153.2 338.6 L153.7 340.9 L154.2 343.1 L154.7 345.3 L155.2 347.4 L155.7 349.5 L156.2 351.6 L156.7 353.6 L157.2 355.5 L157.7 357.4 L158.2 359.3 L158.7 361.1 L159.2 362.9 L159.7 364.7 L160.2 366.4 L160.7 368.0 L161.2 369.6 L161.7 371.2 L162.2 372.7 L162.7 374.2 L163.2 375.7 L163.7 377.1 L164.2 378.4 L164.7 379.8 L165.2 381.0 L165.7 382.3 L166.2 383.5 L166.7 384.7 L167.2 385.8 L167.7 386.9 L168.2 387.9 L168.7 389.0 L169.2 389.9 L169.7 390.9 L170.2 391.8 L170.7 392.7 L171.2 393.5 L171.7 394.3 L172.2 395.0 L172.7 395.8 L173.2 396.5 L173.7 397.1 L174.2 397.8 L174.7 398.3 L175.2 398.9 L175.7 399.4 L176.2 399.9 L176.7 400.4 L177.2 400.8 L177.7 401.2 L178.2 401.6 L178.7 401.9 L179.2 402.2 L179.7 402.5 L180.2 402.7 L180.7 402.9 L181.2 403.1 L181.7 403.3 L182.2 403.4 L182.7 403.5 L183.2 403.6 L183.7 403.6 L184.2 403.6 L184.7 403.5 L185.2 403.4 L185.7 403.2 L186.2 403.0 L186.7 402.8 L187.2 402.6 L187.7 402.3 L188.2 401.9 L188.7 401.5 L189.2 401.1 L189.7 400.6 L190.2 400.0 L190.7 399.4 L191.2 398.7 L191.7 398.0 L192.2 397.2 L192.7 396.3 L193.2 395.4 L193.7 394.4 L194.2 393.3 L194.7 392.2 L195.2 390.9 L195.7 389.6 L196.2 388.2 L196.7 386.7 L197.2 385.1 L197.7 383.5 L198.2 381.7 L198.7 379.8 L199.2 377.9 L199.7 375.8 L200.2 373.6 L200.7 371.4 L201.2 369.0 L201.7 366.5 L202.2 363.9 L202.7 361.2 L203.2 358.4 L203.7 355.4 L204.2 352.3 L204.7 349.1 L205.2 345.8 L205.7 342.3 L206.2 338.8 L206.7 335.1 L207.2 331.2 L207.7 327.3 L208.2 323.2 L208.7 319.0 L209.2 314.7 L209.7 310.2 L210.2 305.6 L210.7 301.0 L211.2 296.2 L211.7 291.3 L212.2 286.5 L212.7 281.6 L213.2 276.8 L213.7 272.0 L214.2 267.3 L214.7 262.6 L215.2 258.2 L215.7 253.9 L216.2 249.7 L216.7 245.8 L217.2 242.1 L217.7 238.5 L218.2 235.2 L218.7 232.0 L219.2 229.0 L219.7 226.2 L220.2 223.5 L220.7 221.0 L221.2 218.6 L221.7 216.3 L222.2 214.2 L222.7 212.1 L223.2 210.2 L223.7 208.4 L224.2 206.7 L224.7 205.0 L225.2 203.5 L225.7 202.0 L226.2 200.6 L226.7 199.2 L227.2 197.9 L227.7 196.6 L228.2 195.3 L228.7 194.1 L229.2 192.8 L229.7 191.6 L230.2 190.5 L230.7 189.3 L231.2 188.2 L231.7 187.1 L232.2 186.0 L232.7 184.9 L233.2 183.9 L233.7 182.9 L234.2 181.9 L234.7 180.9 L235.2 180.0 L235.7 179.2 L236.2 178.3 L236.7 177.5 L237.2 176.8 L237.7 176.1 L238.2 175.4 L238.7 174.9 L239.2 177.2 L239.7 179.5 L240.2 181.8 L240.7 184.1 L241.2 186.4 L241.7 188.8 L242.2 191.2 L242.7 193.6 L243.2 196.0 L243.7 198.5 L244.2 201.0 L244.7 203.6 L245.2 206.2 L245.7 208.9 L246.2 211.7 L246.7 214.5 L247.2 217.4 L247.7 220.4 L248.2 223.5 L248.7 226.6 L249.2 229.9 L249.7 233.1 L250.2 236.5 L250.7 239.9 L251.2 243.3 L251.7 246.8 L252.2 250.3 L252.7 253.8 L253.2 257.3 L253.7 260.8 L254.2 264.3 L254.7 267.8 L255.2 271.2 L255.7 274.7 L256.2 278.1 L256.7 281.4 L257.2 284.7 L257.7 288.0 L258.2 291.2 L258.7 294.3 L259.2 297.4 L259.7 300.5 L260.2 303.4 L260.7 306.4 L261.2 309.3 L261.7 312.1 L262.2 314.9 L262.7 317.6 L263.2 320.3 L263.7 322.9 L264.2 325.5 L264.7 328.0 L265.2 330.5 L265.7 333.0 L266.2 335.4 L266.7 337.7 L267.2 340.0 L267.7 342.3 L268.2 344.5 L268.7 346.6 L269.2 348.7 L269.7 350.8 L270.2 352.8 L270.7 354.8 L271.2 356.7 L271.7 358.6 L272.2 360.5 L272.7 362.3 L273.2 364.0 L273.7 365.7 L274.2 367.4 L274.7 369.0 L275.2 370.6 L275.7 372.2 L276.2 373.7 L276.7 375.1 L277.2 376.5 L277.7 377.9 L278.2 379.3 L278.7 380.6 L279.2 381.8 L279.7 383.0 L280.2 384.2 L280.7 385.4 L281.2 386.5 L281.7 387.5 L282.2 388.6 L282.7 389.6 L283.2 390.5 L283.7 391.4 L284.2 392.3 L284.7 393.2 L285.2 394.0 L285.7 394.8 L286.2 395.5 L286.7 396.2 L287.2 396.9 L287.7 397.5 L288.2 398.1 L288.7 398.7 L289.2 399.2 L289.7 399.7 L290.2 400.2 L290.7 400.7 L291.2 401.1 L291.7 401.4 L292.2 401.8 L292.7 402.1 L293.2 402.4 L293.7 402.6 L294.2 402.9 L294.7 403.1 L295.2 403.2 L295.7 403.4 L296.2 403.5 L296.7 403.5 L297.2 403.6 L297.7 403.6 L298.2 403.5 L298.7 403.4 L299.2 403.3 L299.7 403.1 L300.2 402.9 L300.7 402.7 L301.2 402.4 L301.7 402.1 L302.2 401.7 L302.7 401.2 L303.2 400.8 L303.7 400.2 L304.2 399.6 L304.7 399.0 L305.2 398.3 L305.7 397.5 L306.2 396.7 L306.7 395.8 L307.2 394.8 L307.7 393.7 L308.2 392.6 L308.7 391.4 L309.2 390.1 L309.7 388.7 L310.2 387.3 L310.7 385.7 L311.2 384.1 L311.7 382.4 L312.2 380.5 L312.7 378.6 L313.2 376.6 L313.7 374.5 L314.2 372.2 L314.7 369.9 L315.2 367.5 L315.7 364.9 L316.2 362.2 L316.7 359.5 L317.2 356.5 L317.7 353.5 L318.2 350.4 L318.7 347.1 L319.2 343.7 L319.7 340.1 L320.2 336.5 L320.7 332.7 L321.2 328.8 L321.7 324.8 L322.2 320.6 L322.7 316.3 L323.2 311.9 L323.7 307.4 L324.2 302.7 L324.7 298.0 L325.2 293.2 L325.7 288.3 L326.2 283.5 L326.7 278.6 L327.2 273.8 L327.7 269.0 L328.2 264.4 L328.7 259.9 L329.2 255.5 L329.7 251.3 L330.2 247.3 L330.7 243.5 L331.2 239.9 L331.7 236.5 L332.2 233.2 L332.7 230.2 L333.2 227.3 L333.7 224.5 L334.2 221.9 L334.7 219.5 L335.2 217.2 L335.7 215.0 L336.2 212.9 L336.7 210.9 L337.2 209.1 L337.7 207.3 L338.2 205.7 L338.7 204.1 L339.2 202.6 L339.7 201.1 L340.2 199.7 L340.7 198.4 L341.2 197.0 L341.7 195.8 L342.2 194.5 L342.7 193.3 L343.2 192.1 L343.7 190.9 L344.2 189.7 L344.7 188.6 L345.2 187.5 L345.7 186.4 L346.2 185.3 L346.7 184.3 L347.2 183.2 L347.7 182.3 L348.2 181.3 L348.7 180.4 L349.2 179.5 L349.7 178.6 L350.2 177.8 L350.7 177.1 L351.2 176.3 L351.7 175.6 L352.2 175.0 L352.7 176.3 L353.2 178.6 L353.7 180.9 L354.2 183.2 L354.7 185.6 L355.2 187.9 L355.7 190.3 L356.2 192.7 L356.7 195.1 L357.2 197.5 L357.7 200.1 L358.2 202.6 L358.7 205.2 L359.2 207.9 L359.7 210.6 L360.2 213.4 L360.7 216.3 L361.2 219.3 L361.7 222.3 L362.2 225.4 L362.7 228.6 L363.2 231.9 L363.7 235.2 L364.2 238.6 L364.7 242.0 L365.2 245.5 L365.7 248.9 L366.2 252.4 L366.7 255.9 L367.2 259.5 L367.7 263.0 L368.2 266.5 L368.7 269.9 L369.2 273.4 L369.7 276.8 L370.2 280.2 L370.7 283.5 L371.2 286.8 L371.7 290.0 L372.2 293.1 L372.7 296.2 L373.2 299.3 L373.7 302.3 L374.2 305.3 L374.7 308.2 L375.2 311.0 L375.7 313.8 L376.2 316.6 L376.7 319.3 L377.2 321.9 L377.7 324.5 L378.2 327.1 L378.7 329.6 L379.2 332.1 L379.7 334.5 L380.2 336.8 L380.7 339.1 L381.2 341.4 L381.7 343.6 L382.2 345.8 L382.7 347.9 L383.2 350.0 L383.7 352.1 L384.2 354.0 L384.7 356.0 L385.2 357.9 L385.7 359.8 L386.2 361.6 L386.7 363.3 L387.2 365.1 L387.7 366.8 L388.2 368.4 L388.7 370.0 L389.2 371.6 L389.7 373.1 L390.2 374.6 L390.7 376.0 L391.2 377.4 L391.7 378.8 L392.2 380.1 L392.7 381.3 L393.2 382.6 L393.7 383.8 L394.2 384.9 L394.7 386.1 L395.2 387.1 L395.7 388.2 L396.2 389.2 L396.7 390.2 L397.2 391.1 L397.7 392.0 L398.2 392.9 L398.7 393.7 L399.2 394.5 L399.7 395.2 L400.2 395.9 L400.7 396.6 L401.2 397.3 L401.7 397.9 L402.2 398.5 L402.7 399.0 L403.2 399.6 L403.7 400.0 L404.2 400.5 L404.7 400.9 L405.2 401.3 L405.7 401.7 L406.2 402.0 L406.7 402.3 L407.2 402.5 L407.7 402.8 L408.2 403.0 L408.7 403.2 L409.2 403.3 L409.7 403.4 L410.2 403.5 L410.7 403.6 L411.2 403.6 L411.7 403.5 L412.2 403.4 L412.7 403.3 L413.2 403.2 L413.7 403.0 L414.2 402.8 L414.7 402.5 L415.2 402.2 L415.7 401.8 L416.2 401.4 L416.7 401.0 L417.2 400.4 L417.7 399.9 L418.2 399.3 L418.7 398.6 L419.2 397.8 L419.7 397.0 L420.2 396.1 L420.7 395.2 L421.2 394.1 L421.7 393.0 L422.2 391.9 L422.7 390.6 L423.2 389.3 L423.7 387.8 L424.2 386.3 L424.7 384.7 L425.2 383.0 L425.7 381.2 L426.2 379.4 L426.7 377.4 L427.2 375.3 L427.7 373.1 L428.2 370.8 L428.7 368.4 L429.2 365.9 L429.7 363.3 L430.2 360.5 L430.7 357.7 L431.2 354.7 L431.7 351.6 L432.2 348.3 L432.7 345.0 L433.2 341.5 L433.7 337.9 L434.2 334.1 L434.7 330.3 L435.2 326.3 L435.7 322.2 L436.2 318.0 L436.7 313.6 L437.2 309.1 L437.7 304.5 L438.2 299.8 L438.7 295.0 L439.2 290.2 L439.7 285.3 L440.2 280.5 L440.7 275.6 L441.2 270.8 L441.7 266.1 L442.2 261.6 L442.7 257.1 L443.2 252.8 L443.7 248.8 L444.2 244.9 L444.7 241.2 L445.2 237.7 L445.7 234.4 L446.2 231.3 L446.7 228.3 L447.2 225.5 L447.7 222.9 L448.2 220.4 L448.7 218.0 L449.2 215.8 L449.7 213.7 L450.2 211.7 L450.7 209.8 L451.2 208.0 L451.7 206.3 L452.2 204.7 L452.7 203.1 L453.2 201.6 L453.7 200.2 L454.2 198.9 L454.7 197.5 L455.2 196.3 L455.7 195.0 L456.2 193.8 L456.7 192.6 L457.2 191.4 L457.7 190.2 L458.2 189.0 L458.7 187.9 L459.2 186.8 L459.7 185.7 L460.2 184.6 L460.7 183.6 L461.2 182.6 L461.7 181.7 L462.2 180.7 L462.7 179.8 L463.2 179.0 L463.7 178.1 L464.2 177.4 L464.7 176.6 L465.2 175.9 L465.7 175.2 L466.2 175.4 L466.7 177.7 L467.2 180.0 L467.7 182.4 L468.2 184.7 L468.7 187.0 L469.2 189.4 L469.7 191.7 L470.2 194.2 L470.7 196.6 L471.2 199.1 L471.7 201.6 L472.2 204.2 L472.7 206.9 L473.2 209.6 L473.7 212.4 L474.2 215.2 L474.7 218.1 L475.2 221.1 L475.7 224.2 L476.2 227.4 L476.7 230.6 L477.2 233.9 L477.7 237.3 L478.2 240.7 L478.7 244.1 L479.2 247.6 L479.7 251.1 L480.2 254.6 L480.7 258.1 L481.2 261.6 L481.7 265.1 L482.2 268.6 L482.7 272.1 L483.2 275.5 L483.7 278.9 L484.2 282.2 L484.7 285.5 L485.2 288.8 L485.7 291.9 L486.2 295.1 L486.7 298.1 L487.2 301.2 L487.7 304.1 L488.2 307.1 L488.7 309.9 L489.2 312.8 L489.7 315.5 L490.2 318.3 L490.7 320.9 L491.2 323.5 L491.7 326.1 L492.2 328.6 L492.7 331.1 L493.2 333.6 L493.7 335.9 L494.2 338.3 L494.7 340.5 L495.2 342.8 L495.7 345.0 L496.2 347.1 L496.7 349.2 L497.2 351.3 L497.7 353.3 L498.2 355.3 L498.7 357.2 L499.2 359.1 L499.7 360.9 L500.2 362.7 L500.7 364.4 L501.2 366.1 L501.7 367.8 L502.2 369.4 L502.7 371.0 L503.2 372.5 L503.7 374.0 L504.2 375.5 L504.7 376.9 L505.2 378.2 L505.7 379.6 L506.2 380.9 L506.7 382.1 L507.2 383.3 L507.7 384.5 L508.2 385.6 L508.7 386.7 L509.2 387.8 L509.7 388.8 L510.2 389.8 L510.7 390.7 L511.2 391.7 L511.7 392.5 L512.2 393.4 L512.7 394.2 L513.2 394.9 L513.7 395.7 L514.2 396.4 L514.7 397.0 L515.2 397.7 L515.7 398.3 L516.2 398.8 L516.7 399.4 L517.2 399.9 L517.7 400.3 L518.2 400.8 L518.7 401.2 L519.2 401.5 L519.7 401.9 L520.2 402.2 L520.7 402.4 L521.2 402.7 L521.7 402.9 L522.2 403.1 L522.7 403.3 L523.2 403.4 L523.7 403.5 L524.2 403.6 L524.7 403.6 L525.2 403.6 L525.7 403.5 L526.2 403.4 L526.7 403.2 L527.2 403.1 L527.7 402.9 L528.2 402.6 L528.7 402.3 L529.2 402.0 L529.7 401.6 L530.2 401.1 L530.7 400.6 L531.2 400.1 L531.7 399.5 L532.2 398.8 L532.7 398.1 L533.2 397.3 L533.7 396.5 L534.2 395.5 L534.7 394.5 L535.2 393.5 L535.7 392.3 L536.2 391.1 L536.7 389.8 L537.2 388.4 L537.7 386.9 L538.2 385.3 L538.7 383.7 L539.2 381.9 L539.7 380.1 L540.2 378.1 L540.7 376.1 L541.2 374.0 L541.7 371.7 L542.2 369.3 L542.7 366.9 L543.2 364.3 L543.7 361.6 L544.2 358.8 L544.7 355.8 L545.2 352.8 L545.7 349.6 L546.2 346.3 L546.7 342.8 L547.2 339.3 L547.7 335.6 L548.2 331.8 L548.7 327.8 L549.2 323.8 L549.7 319.6 L550.2 315.3 L550.7 310.8 L551.2 306.3 L551.7 301.6 L552.2 296.9 L552.7 292.0 L553.2 287.2 L553.7 282.3 L554.2 277.4 L554.7 272.6 L555.2 267.9 L555.7 263.3 L556.2 258.8 L556.7 254.4 L557.2 250.3 L557.7 246.3 L558.2 242.6 L558.7 239.0 L559.2 235.7 L559.7 232.5 L560.2 229.4 L560.7 226.6 L561.2 223.9 L561.7 221.3 L562.2 218.9 L562.7 216.6 L563.2 214.5 L563.7 212.4 L564.2 210.5 L564.7 208.7 L565.2 206.9 L565.7 205.3 L566.2 203.7 L566.7 202.2 L567.2 200.8 L567.7 199.4 L568.2 198.0 L568.7 196.7 L569.2 195.5 L569.7 194.2 L570.2 193.0 L570.7 191.8 L571.2 190.6 L571.7 189.5 L572.2 188.3 L572.7 187.2 L573.2 186.1 L573.7 185.0 L574.2 184.0 L574.7 183.0 L575.2 182.0 L575.7 181.1 L576.2 180.2 L576.7 179.3 L577.2 178.4 L577.7 177.6 L578.2 176.9 L578.7 176.2 L579.2 175.5 L579.7 174.9 L580.2 176.9 L580.7 179.2 L581.2 181.5 L581.7 183.8 L582.2 186.1 L582.7 188.5 L583.2 190.8 L583.7 193.2 L584.2 195.7 L584.7 198.1 L585.2 200.7 L585.7 203.2 L586.2 205.9 L586.7 208.5 L587.2 211.3 L587.7 214.1 L588.2 217.0 L588.7 220.0 L589.2 223.0 L589.7 226.2 L590.2 229.4 L590.7 232.7 L591.2 236.0 L591.7 239.4 L592.2 242.8 L592.7 246.3 L593.2 249.8 L593.7 253.3 L594.2 256.8 L594.7 260.3 L595.2 263.8 L595.7 267.3 L596.2 270.8 L596.7 274.2 L597.2 277.6 L597.7 281.0 L598.2 284.3 L598.7 287.5 L599.2 290.7 L599.7 293.9 L600.2 297.0 L600.7 300.0 L601.2 303.0 L601.7 306.0 L602.2 308.9 L602.7 311.7 L603.2 314.5 L603.7 317.2 L604.2 319.9 L604.7 322.6 L605.2 325.1 L605.7 327.7 L606.2 330.2 L606.7 332.6 L607.2 335.0 L607.7 337.4 L608.2 339.7 L608.7 341.9 L609.2 344.2 L609.7 346.3 L610.2 348.4 L610.7 350.5 L611.2 352.5 L611.7 354.5 L612.2 356.5 L612.7 358.3 L613.2 360.2 L613.7 362.0 L614.2 363.8 L614.7 365.5 L615.2 367.2 L615.7 368.8 L616.2 370.4 L616.7 371.9 L617.2 373.4 L617.7 374.9 L618.2 376.3 L618.7 377.7 L619.2 379.1" fill="none" stroke="#1d9dce" stroke-width="1.8" stroke-linejoin="round"/>
<path d="M51.7 141.9L58.9 145.9L51.7 149.9Z" fill="#1fa3e6"/>
<path d="M51.7 151.9L58.9 155.9L51.7 159.9Z" fill="#e0b800"/>
<path d="M619.5 140L612.0 144.3L619.5 148.6Z" fill="#e0b800"/>
<path d="M331.9 79.2L335.6 86.4L339.3 79.2Z" fill="#f2f2f2"/>
<path d="M632.3 80 L631.1 80.0 L631.0 80.5 L631.2 81.0 L630.7 81.5 L631.0 82.0 L630.5 82.5 L630.8 83.0 L630.6 83.5 L630.7 84.0 L630.4 84.5 L630.2 85.0 L630.5 85.5 L630.1 86.0 L629.9 86.5 L630.1 87.0 L629.7 87.5 L629.8 88.0 L629.7 88.5 L629.3 89.0 L629.1 89.5 L629.3 90.0 L628.9 90.5 L629.1 91.0 L629.2 91.5 L629.1 92.0 L629.0 92.5 L629.0 93.0 L629.2 93.5 L629.2 94.0 L629.5 94.5 L629.6 95.0 L629.7 95.5 L629.8 96.0 L629.8 96.5 L629.9 97.0 L630.3 97.5 L630.1 98.0 L630.6 98.5 L630.5 99.0 L630.7 99.5 L630.5 100.0 L630.6 100.5 L630.6 101.0 L630.8 101.5 L631.0 102.0 L630.7 102.5 L630.7 103.0 L631.0 103.5 L630.6 104.0 L631.1 104.5 L630.8 105.0 L630.9 105.5 L630.8 106.0 L630.8 106.5 L630.5 107.0 L630.7 107.5 L630.2 108.0 L630.1 108.5 L630.2 109.0 L630.3 109.5 L630.3 110.0 L630.1 110.5 L629.9 111.0 L629.7 111.5 L629.8 112.0 L629.8 112.5 L629.8 113.0 L629.7 113.5 L629.3 114.0 L629.3 114.5 L629.3 115.0 L629.0 115.5 L629.1 116.0 L628.9 116.5 L628.9 117.0 L628.8 117.5 L629.0 118.0 L628.9 118.5 L628.7 119.0 L628.3 119.5 L628.4 120.0 L628.4 120.5 L628.5 121.0 L628.6 121.5 L629.0 122.0 L629.0 122.5 L628.8 123.0 L629.2 123.5 L629.2 124.0 L629.7 124.5 L629.6 125.0 L630.1 125.5 L630.2 126.0 L630.3 126.5 L630.5 127.0 L630.4 127.5 L630.4 128.0 L630.6 128.5 L630.6 129.0 L630.3 129.5 L630.7 130.0 L630.3 130.5 L630.6 131.0 L630.6 131.5 L630.7 132.0 L630.6 132.5 L630.7 133.0 L630.6 133.5 L630.6 134.0 L630.6 134.5 L630.5 135.0 L630.3 135.5 L630.4 136.0 L630.2 136.5 L630.6 137.0 L630.2 137.5 L630.4 138.0 L630.5 138.5 L630.7 139.0 L630.4 139.5 L630.5 140.0 L630.7 140.5 L630.6 141.0 L630.5 141.5 L630.7 142.0 L630.5 142.5 L630.2 143.0 L630.5 143.5 L630.5 144.0 L630.4 144.5 L630.3 145.0 L630.3 145.5 L630.7 146.0 L630.3 146.5 L630.5 147.0 L630.5 147.5 L630.5 148.0 L630.8 148.5 L630.7 149.0 L630.5 149.5 L630.7 150.0 L630.6 150.5 L630.6 151.0 L630.4 151.5 L630.8 152.0 L630.8 152.5 L630.9 153.0 L630.9 153.5 L631.0 154.0 L630.8 154.5 L630.9 155.0 L630.9 155.5 L630.7 156.0 L630.6 156.5 L630.6 157.0 L630.8 157.5 L630.7 158.0 L630.8 158.5 L630.6 159.0 L630.8 159.5 L631.0 160.0 L631.0 160.5 L631.0 161.0 L631.1 161.5 L630.9 162.0 L631.1 162.5 L630.9 163.0 L631.2 163.5 L630.9 164.0 L631.2 164.5 L630.9 165.0 L630.9 165.5 L630.9 166.0 L631.1 166.5 L631.3 167.0 L631.3 167.5 L630.9 168.0 L631.1 168.5 L631.1 169.0 L631.1 169.5 L630.8 170.0 L631.0 170.5 L630.6 171.0 L630.7 171.5 L630.3 172.0 L630.1 172.5 L629.9 173.0 L629.2 173.5 L628.5 174.0 L627.2 174.5 L626.3 175.0 L624.9 175.5 L623.3 176.0 L621.7 176.5 L620.2 177.0 L619.7 177.5 L619.7 178.0 L619.7 178.5 L619.7 179.0 L619.7 179.5 L619.7 180.0 L619.7 180.5 L619.7 181.0 L619.7 181.5 L619.7 182.0 L621.2 182.5 L622.5 183.0 L623.9 183.5 L625.4 184.0 L626.4 184.5 L627.3 185.0 L628.3 185.5 L629.2 186.0 L629.7 186.5 L630.2 187.0 L632.3 187.5Z" fill="#dcb800"/><path d="M632.3 187.5 L631.0 187.5 L630.9 188.0 L630.7 188.5 L630.9 189.0 L630.9 189.5 L630.8 190.0 L631.1 190.5 L631.1 191.0 L630.8 191.5 L630.9 192.0 L631.2 192.5 L630.7 193.0 L631.2 193.5 L630.8 194.0 L630.8 194.5 L631.0 195.0 L631.0 195.5 L631.2 196.0 L630.9 196.5 L630.9 197.0 L631.0 197.5 L630.7 198.0 L631.2 198.5 L630.8 199.0 L630.9 199.5 L631.0 200.0 L630.7 200.5 L631.1 201.0 L631.0 201.5 L630.7 202.0 L631.1 202.5 L631.2 203.0 L631.0 203.5 L631.1 204.0 L630.8 204.5 L630.9 205.0 L631.2 205.5 L631.0 206.0 L631.0 206.5 L631.2 207.0 L631.0 207.5 L630.7 208.0 L630.8 208.5 L630.9 209.0 L631.2 209.5 L630.9 210.0 L630.9 210.5 L631.2 211.0 L631.0 211.5 L630.9 212.0 L630.8 212.5 L630.8 213.0 L631.0 213.5 L630.9 214.0 L631.1 214.5 L630.8 215.0 L631.1 215.5 L630.8 216.0 L630.8 216.5 L631.1 217.0 L630.8 217.5 L630.8 218.0 L631.0 218.5 L631.2 219.0 L630.9 219.5 L631.0 220.0 L631.1 220.5 L630.9 221.0 L631.0 221.5 L630.7 222.0 L630.8 222.5 L630.9 223.0 L630.9 223.5 L631.2 224.0 L631.1 224.5 L630.8 225.0 L631.0 225.5 L630.9 226.0 L631.1 226.5 L630.8 227.0 L631.0 227.5 L630.8 228.0 L631.2 228.5 L631.0 229.0 L630.8 229.5 L631.0 230.0 L630.8 230.5 L630.8 231.0 L631.0 231.5 L630.9 232.0 L631.2 232.5 L631.1 233.0 L631.1 233.5 L630.9 234.0 L630.8 234.5 L631.0 235.0 L631.1 235.5 L630.8 236.0 L630.9 236.5 L630.8 237.0 L630.8 237.5 L630.9 238.0 L631.0 238.5 L631.2 239.0 L631.1 239.5 L630.9 240.0 L631.2 240.5 L630.7 241.0 L631.1 241.5 L630.8 242.0 L631.0 242.5 L630.7 243.0 L630.8 243.5 L630.7 244.0 L630.9 244.5 L631.2 245.0 L631.0 245.5 L630.7 246.0 L630.9 246.5 L630.8 247.0 L630.8 247.5 L631.0 248.0 L630.9 248.5 L631.1 249.0 L630.8 249.5 L630.7 250.0 L630.9 250.5 L631.0 251.0 L630.8 251.5 L631.0 252.0 L631.0 252.5 L631.1 253.0 L631.0 253.5 L631.1 254.0 L630.7 254.5 L630.8 255.0 L631.0 255.5 L631.2 256.0 L631.1 256.5 L631.0 257.0 L631.1 257.5 L631.1 258.0 L631.0 258.5 L631.0 259.0 L630.9 259.5 L631.0 260.0 L630.8 260.5 L631.0 261.0 L631.1 261.5 L630.9 262.0 L630.7 262.5 L630.8 263.0 L631.2 263.5 L631.1 264.0 L631.0 264.5 L630.8 265.0 L631.2 265.5 L630.8 266.0 L631.1 266.5 L631.0 267.0 L631.0 267.5 L630.8 268.0 L630.8 268.5 L630.9 269.0 L630.9 269.5 L630.9 270.0 L631.1 270.5 L631.0 271.0 L630.9 271.5 L631.1 272.0 L630.8 272.5 L630.9 273.0 L631.0 273.5 L631.1 274.0 L630.9 274.5 L630.7 275.0 L631.1 275.5 L631.1 276.0 L631.0 276.5 L630.8 277.0 L630.7 277.5 L631.0 278.0 L630.9 278.5 L630.8 279.0 L630.7 279.5 L631.2 280.0 L630.9 280.5 L630.9 281.0 L630.8 281.5 L630.8 282.0 L630.9 282.5 L630.7 283.0 L631.0 283.5 L630.9 284.0 L630.9 284.5 L630.9 285.0 L631.0 285.5 L630.9 286.0 L630.8 286.5 L630.9 287.0 L630.8 287.5 L631.0 288.0 L630.9 288.5 L631.0 289.0 L631.0 289.5 L630.7 290.0 L631.1 290.5 L630.8 291.0 L630.8 291.5 L630.9 292.0 L630.8 292.5 L631.1 293.0 L630.8 293.5 L630.9 294.0 L630.8 294.5 L630.8 295.0 L630.9 295.5 L630.9 296.0 L631.1 296.5 L630.7 297.0 L630.9 297.5 L630.7 298.0 L631.2 298.5 L631.2 299.0 L631.1 299.5 L630.8 300.0 L630.8 300.5 L630.9 301.0 L631.1 301.5 L630.9 302.0 L631.1 302.5 L630.8 303.0 L631.0 303.5 L630.8 304.0 L630.8 304.5 L630.9 305.0 L630.9 305.5 L631.0 306.0 L631.0 306.5 L630.9 307.0 L630.9 307.5 L630.7 308.0 L631.0 308.5 L630.6 309.0 L630.5 309.5 L630.9 310.0 L630.5 310.5 L630.7 311.0 L630.7 311.5 L630.7 312.0 L630.5 312.5 L631.0 313.0 L630.5 313.5 L630.7 314.0 L630.5 314.5 L630.7 315.0 L630.6 315.5 L630.8 316.0 L630.9 316.5 L630.9 317.0 L630.6 317.5 L630.6 318.0 L630.7 318.5 L630.7 319.0 L630.5 319.5 L630.4 320.0 L630.5 320.5 L630.7 321.0 L630.8 321.5 L630.8 322.0 L630.5 322.5 L630.4 323.0 L630.5 323.5 L630.4 324.0 L630.3 324.5 L630.4 325.0 L630.7 325.5 L630.4 326.0 L630.4 326.5 L630.3 327.0 L630.3 327.5 L630.4 328.0 L630.4 328.5 L630.6 329.0 L630.3 329.5 L630.2 330.0 L630.5 330.5 L630.4 331.0 L630.4 331.5 L630.6 332.0 L630.2 332.5 L630.1 333.0 L630.4 333.5 L630.5 334.0 L630.4 334.5 L630.6 335.0 L630.4 335.5 L630.3 336.0 L630.1 336.5 L630.4 337.0 L630.4 337.5 L630.4 338.0 L630.1 338.5 L630.4 339.0 L630.1 339.5 L630.1 340.0 L630.0 340.5 L630.2 341.0 L630.0 341.5 L630.4 342.0 L630.1 342.5 L630.4 343.0 L630.0 343.5 L630.3 344.0 L630.0 344.5 L630.2 345.0 L630.4 345.5 L630.1 346.0 L630.4 346.5 L630.0 347.0 L630.1 347.5 L630.1 348.0 L630.2 348.5 L630.2 349.0 L630.1 349.5 L629.9 350.0 L630.0 350.5 L629.9 351.0 L630.1 351.5 L630.0 352.0 L630.2 352.5 L630.1 353.0 L630.1 353.5 L630.1 354.0 L630.1 354.5 L629.8 355.0 L629.9 355.5 L629.8 356.0 L629.9 356.5 L630.1 357.0 L630.0 357.5 L629.9 358.0 L629.8 358.5 L629.9 359.0 L630.1 359.5 L629.9 360.0 L629.7 360.5 L629.8 361.0 L630.0 361.5 L630.0 362.0 L629.6 362.5 L629.8 363.0 L629.8 363.5 L629.9 364.0 L629.6 364.5 L630.0 365.0 L629.7 365.5 L629.7 366.0 L629.7 366.5 L629.7 367.0 L629.6 367.5 L629.8 368.0 L629.8 368.5 L629.7 369.0 L629.6 369.5 L629.8 370.0 L629.9 370.5 L629.7 371.0 L629.8 371.5 L629.9 372.0 L629.6 372.5 L629.7 373.0 L629.6 373.5 L629.6 374.0 L629.5 374.5 L629.6 375.0 L629.5 375.5 L629.6 376.0 L629.6 376.5 L629.8 377.0 L629.8 377.5 L629.8 378.0 L629.5 378.5 L629.8 379.0 L629.3 379.5 L629.3 380.0 L629.3 380.5 L629.6 381.0 L629.5 381.5 L629.6 382.0 L629.3 382.5 L629.3 383.0 L629.4 383.5 L629.5 384.0 L629.5 384.5 L629.4 385.0 L629.2 385.5 L629.5 386.0 L629.5 386.5 L629.6 387.0 L629.5 387.5 L629.3 388.0 L629.3 388.5 L629.5 389.0 L629.3 389.5 L629.2 390.0 L629.5 390.5 L629.4 391.0 L629.2 391.5 L629.4 392.0 L629.3 392.5 L629.3 393.0 L629.1 393.5 L629.4 394.0 L629.5 394.5 L629.0 395.0 L629.3 395.5 L629.0 396.0 L629.0 396.5 L629.0 397.0 L628.9 397.5 L628.7 398.0 L628.8 398.5 L628.7 399.0 L627.9 399.5 L627.5 400.0 L627.8 400.5 L627.3 401.0 L627.1 401.5 L625.7 402.0 L623.8 402.5 L623.2 403.0 L623.6 403.5 L619.7 404.0 L619.7 404.5 L619.7 405.0 L632.3 405Z" fill="#1d9dce"/>
</svg>
<div class="t yl" style="left:0.5px;top:73.3px">C1 mV</div>
<div class="t bl" style="left:26px;top:73.3px">C2 V</div>
<svg class="a" style="left:55px;top:69px" width="7" height="9" viewBox="0 0 7 9"><path d="M5.6 1 L1.4 4.5 L5.6 8" fill="none" stroke="#2f7cf0" stroke-width="1.4"/></svg>
<div class="a" style="left:64px;top:66.6px;width:52px;height:12.2px;box-sizing:border-box;border:0.9px solid #2f9a4e"></div>
<div class="tc" style="left:90px;top:73.1px;color:#f0f0f0;font-size:6.9px;letter-spacing:0.15px">Trig'd</div>
<div class="a" style="left:116.5px;top:66.6px;width:12.5px;height:12.2px;box-sizing:border-box;border:0.9px solid #a58a00"></div>
<div class="tc yl" style="left:122.8px;top:73.1px;color:#e8c000">C1</div>
<div class="a" style="left:129.5px;top:66.6px;width:13.5px;height:12.2px;box-sizing:border-box;border:0.9px solid #1b93c4"></div>
<div class="tc bl" style="left:136.3px;top:73.1px;color:#22a8e0">C2</div>
<div class="t" style="left:144.6px;top:73.1px;color:#c8c8c8;letter-spacing:0.04px">8192 samples at 1.5873 MHz | 2022-07-09 09:38:16.966</div>
<div class="t yl" style="left:1.2px;top:82.9px;letter-spacing:-0.25px">115</div>
<div class="t bl" style="left:27.2px;top:82.9px;letter-spacing:-0.25px">10</div>
<div class="t yl" style="left:1.2px;top:115.8px;letter-spacing:-0.25px">65</div>
<div class="t bl" style="left:27.2px;top:115.8px;letter-spacing:-0.25px">5</div>
<div class="t yl" style="left:1.2px;top:148.7px;letter-spacing:-0.25px">15</div>
<div class="t bl" style="left:27.2px;top:148.7px;letter-spacing:-0.25px">0</div>
<div class="t yl" style="left:1.3px;top:181.6px;letter-spacing:-0.25px">−35</div>
<div class="t bl" style="left:26.9px;top:181.6px;letter-spacing:-0.25px">−5</div>
<div class="t yl" style="left:1.3px;top:214.5px;letter-spacing:-0.25px">−85</div>
<div class="t bl" style="left:26.9px;top:214.5px;letter-spacing:-0.25px">−10</div>
<div class="t yl" style="left:1.3px;top:247.4px;letter-spacing:-0.25px">−135</div>
<div class="t bl" style="left:26.9px;top:247.4px;letter-spacing:-0.25px">−15</div>
<div class="t yl" style="left:1.3px;top:280.3px;letter-spacing:-0.25px">−185</div>
<div class="t bl" style="left:26.9px;top:280.3px;letter-spacing:-0.25px">−20</div>
<div class="t yl" style="left:1.3px;top:313.2px;letter-spacing:-0.25px">−235</div>
<div class="t bl" style="left:26.9px;top:313.2px;letter-spacing:-0.25px">−25</div>
<div class="t yl" style="left:1.3px;top:346.1px;letter-spacing:-0.25px">−285</div>
<div class="t bl" style="left:26.9px;top:346.1px;letter-spacing:-0.25px">−30</div>
<div class="t yl" style="left:1.3px;top:379.0px;letter-spacing:-0.25px">−335</div>
<div class="t bl" style="left:26.9px;top:379.0px;letter-spacing:-0.25px">−35</div>
<div class="t yl" style="left:1.3px;top:411.9px;letter-spacing:-0.25px">−385</div>
<div class="t bl" style="left:26.9px;top:411.9px;letter-spacing:-0.25px">−40</div>
<div class="t" style="left:44.9px;top:421.9px;color:#d8d8d8">−2.5 ms</div>
<div class="t" style="left:101.0px;top:421.9px;color:#d8d8d8">−2 ms</div>
<div class="t" style="left:157.2px;top:421.9px;color:#d8d8d8">−1.5 ms</div>
<div class="t" style="left:213.3px;top:421.9px;color:#d8d8d8">−1 ms</div>
<div class="t" style="left:269.5px;top:421.9px;color:#d8d8d8">−0.5 ms</div>
<div class="t" style="left:325.6px;top:421.9px;color:#d8d8d8">0 ms</div>
<div class="t" style="left:381.8px;top:421.9px;color:#d8d8d8">0.5 ms</div>
<div class="t" style="left:437.9px;top:421.9px;color:#d8d8d8">1 ms</div>
<div class="t" style="left:494.1px;top:421.9px;color:#d8d8d8">1.5 ms</div>
<div class="t" style="left:550.2px;top:421.9px;color:#d8d8d8">2 ms</div>
<div class="t" style="left:606.4px;top:421.9px;color:#d8d8d8">2.5 ms</div>
<div class="a" style="left:1.1px;top:415.6px;width:18.1px;height:11px;background:#e9e9e9;border:0.6px solid #b0b0b0;box-sizing:border-box"></div>
<div class="a" style="left:11.8px;top:416.2px;width:6.9px;height:9.8px;background:#dadada;border-left:0.5px solid #b8b8b8;box-sizing:border-box"></div>
<div class="tc" style="left:6.4px;top:421.4px;color:#000;font-size:7px">X</div>
<svg class="a" style="left:12.9px;top:419.3px" width="5" height="4"viewBox="0 0 5 4"><path d="M0.6 0.8h3.8L2.5 3.2z" fill="#222"/></svg>
<svg class="a" style="left:540.0px;top:66.7px" width="11" height="11" viewBox="0 0 11 11"><path d="M6.4 6.4L9.6 9.8" stroke="#b0b0b0" stroke-width="1.5"/><circle cx="4.4" cy="4.4" r="3.3" fill="#2258ae" stroke="#c0cce0" stroke-width="0.9"/><path d="M4.4 2.6v3.4" stroke="#fff" stroke-width="1.2"/></svg>
<svg class="a" style="left:553.5px;top:67.2px" width="10" height="10" viewBox="0 0 10 10"><path d="M2 1.2l2.8 2.8M2 1.2v2.2M2 1.2h2.2" stroke="#2468c8" stroke-width="1" fill="none"/><rect x="1" y="6" width="7.4" height="2" fill="#7c7c7c"/></svg>
<svg class="a" style="left:566.0px;top:67.2px" width="10" height="10" viewBox="0 0 10 10"><path d="M1.2 1v4M1.2 3h5.4" stroke="#2468c8" stroke-width="1" fill="none"/><rect x="1" y="6" width="7.4" height="2" fill="#7c7c7c"/></svg>
<svg class="a" style="left:579.0px;top:67.2px" width="10" height="10" viewBox="0 0 10 10"><path d="M1 1.4h7M1 3h5M1 4.6h5" stroke="#2468c8" stroke-width="1" fill="none"/><rect x="1" y="6" width="7.4" height="2" fill="#7c7c7c"/></svg>
<svg class="a" style="left:593.0px;top:66.7px" width="11" height="11" viewBox="0 0 11 11"><path d="M6.4 6.4L9.6 9.8" stroke="#b0b0b0" stroke-width="1.5"/><circle cx="4.4" cy="4.4" r="3.3" fill="#2258ae" stroke="#c0cce0" stroke-width="0.9"/><path d="M3 3.6h2.8M3 5h2.8" stroke="#fff" stroke-width="1.2"/></svg>
<div class="a" style="left:607px;top:66.5px;width:11.5px;height:12.3px;background:#e4e4e4"></div>
<svg class="a" style="left:608.3px;top:68.2px" width="9" height="9" viewBox="0 0 9 9"><circle cx="4.5" cy="4.5" r="3.5" fill="none" stroke="#8e98a4" stroke-width="1.5" stroke-dasharray="1.5 1.25"/><circle cx="4.5" cy="4.5" r="2.7" fill="#e6eaef" stroke="#808b98" stroke-width="0.8"/><circle cx="4.5" cy="4.5" r="1.1" fill="#fbfcfd" stroke="#7a8694" stroke-width="0.5"/><path d="M4.5 4.5L6.3 6.3" stroke="#5f8fc8" stroke-width="0.7"/></svg>
<div class="a" style="left:620px;top:66.5px;width:12.5px;height:12.3px;background:#ededed;border-left:0.6px solid #999;box-sizing:border-box"></div>
<div class="tc" style="left:626.3px;top:72.9px;color:#000">Y</div>
<div class="a" style="left:632.5px;top:66px;width:117.5px;height:362px;background:#f0f0f0"></div>
<div class="a" style="left:632.4px;top:79px;width:2.2px;height:349px;background:#fdfdfd"></div>
<div class="a" style="left:739.5px;top:78px;width:9.5px;height:350px;background:#f3f3f3;border-left:0.6px solid #fafafa;box-sizing:border-box"></div>
<div class="a" style="left:748.7px;top:0;width:1.3px;height:428px;background:#7a7a7a"></div>
<div class="a" style="left:0;top:426.7px;width:750px;height:1.3px;background:#5a5a5a"></div>
<svg class="a" style="left:740.5px;top:80px" width="7" height="5" viewBox="0 0 7 5"><path d="M0.8 4L3.5 1.2L6.2 4" fill="none" stroke="#999" stroke-width="0.7"/></svg>
<svg class="a" style="left:740.3px;top:419.3px" width="7" height="5" viewBox="0 0 7 5"><path d="M0.8 1L3.5 3.8L6.2 1" fill="none" stroke="#999" stroke-width="0.7"/></svg>
<svg class="a" style="left:634.5px;top:69px" width="9" height="6" viewBox="0 0 9 6"><path d="M0.5 3h5.5" stroke="#3aa63a" stroke-width="1.3"/><path d="M5 0.8L7.8 3L5 5.2z" fill="#3aa63a"/></svg>
<svg class="a" style="left:633px;top:76.9px" width="105" height="44.8" viewBox="0 0 105 44.8"><rect x="1.85" y="1.85" width="100.50" height="41.10" fill="#ececec" stroke="#cdcdcd" stroke-width="0.70"/></svg><svg class="a" style="left:636.0px;top:80.9px" width="7" height="7" viewBox="0 0 7 7"><rect x="0.4" y="0.4" width="6.2" height="6.2" fill="#fff" stroke="#333" stroke-width="0.6"/><path d="M1.5 3.6L2.9 5L5.5 1.9" fill="none" stroke="#222" stroke-width="0.7"/></svg><div class="t" style="left:645.5px;top:84.7px">Time</div><div class="a" style="left:721.5px;top:80.1px;width:11.5px;height:7.6px;background:#d9d9d9;border:0.5px solid #c2c2c2;box-sizing:border-box"></div><svg class="a" style="left:723.9px;top:80.5px" width="7" height="7" viewBox="0 0 9 9"><circle cx="4.5" cy="4.5" r="3.5" fill="none" stroke="#8e98a4" stroke-width="1.5" stroke-dasharray="1.5 1.25"/><circle cx="4.5" cy="4.5" r="2.7" fill="#e6eaef" stroke="#808b98" stroke-width="0.8"/><circle cx="4.5" cy="4.5" r="1.1" fill="#fbfcfd" stroke="#7a8694" stroke-width="0.5"/><path d="M4.5 4.5L6.3 6.3" stroke="#5f8fc8" stroke-width="0.7"/></svg><div class="t" style="left:638.3px;top:93.8px">Position:</div><div class="a" style="left:674.5px;top:89.0px;width:58.7px;height:9.2px;background:#fff;border:0.6px solid #b4b4b4;box-sizing:border-box;color:#111"><span class="t" style="left:2.0px;top:4.2px">0 s</span><svg class="a" style="right:2.0px;top:50%;margin-top:-1.3px" width="5.4" height="3.2" viewBox="0 0 5.4 3.2"><path d="M0.4 0.4L2.7 2.7L5 0.4" fill="none" stroke="#444" stroke-width="0.65"/></svg></div><div class="t" style="left:638.3px;top:103.6px">Base:</div><div class="a" style="left:674.5px;top:99.1px;width:58.7px;height:9.0px;background:#fff;border:0.6px solid #b4b4b4;box-sizing:border-box;color:#111"><span class="t" style="left:2.0px;top:4.1px">500 us/div</span><svg class="a" style="right:2.0px;top:50%;margin-top:-1.3px" width="5.4" height="3.2" viewBox="0 0 5.4 3.2"><path d="M0.4 0.4L2.7 2.7L5 0.4" fill="none" stroke="#444" stroke-width="0.65"/></svg></div>
<div class="a" style="left:636px;top:108.8px;width:98px;height:10.4px;background:#bdd9f2"></div>
<svg class="a" style="left:682.5px;top:110.5px" width="6" height="8" viewBox="0 0 6 8"><path d="M3 0.6V5.4" fill="none" stroke="#4aa64a" stroke-width="1.3"/><path d="M0.9 4.2L3 7.2L5.1 4.2Z" fill="#3f9e3f"/></svg>
<svg class="a" style="left:636.3px;top:125px" width="9" height="9" viewBox="0 0 9 9"><circle cx="4.5" cy="4.5" r="3.5" fill="none" stroke="#8e98a4" stroke-width="1.5" stroke-dasharray="1.5 1.25"/><circle cx="4.5" cy="4.5" r="2.7" fill="#e6eaef" stroke="#808b98" stroke-width="0.8"/><circle cx="4.5" cy="4.5" r="1.1" fill="#fbfcfd" stroke="#7a8694" stroke-width="0.5"/><path d="M4.5 4.5L6.3 6.3" stroke="#5f8fc8" stroke-width="0.7"/></svg>
<div class="t" style="left:648px;top:129.5px">Options</div>
<svg class="a" style="left:729px;top:128px" width="5" height="4" viewBox="0 0 5 4"><path d="M0.6 0.8h3.8L2.5 3.2z" fill="#111"/></svg>
<div class="a" style="left:634.5px;top:137.6px;width:101.2px;height:11.2px;background:#dedede;border:0.6px solid #c8c8c8;box-sizing:border-box"></div>
<svg class="a" style="left:636.3px;top:140.2px" width="7" height="7" viewBox="0 0 7 7"><path d="M3.5 0.6v5.8M0.6 3.5h5.8" stroke="#2da332" stroke-width="1.7"/></svg>
<div class="t" style="left:644.8px;top:143.6px">Add Channel</div>
<svg class="a" style="left:729px;top:142px" width="5" height="4" viewBox="0 0 5 4"><path d="M0.6 0.8h3.8L2.5 3.2z" fill="#111"/></svg>
<svg class="a" style="left:633px;top:149.7px" width="105" height="34.4" viewBox="0 0 105 34.4"><rect x="2.20" y="2.20" width="99.80" height="30.00" fill="#ececec" stroke="#e0b400" stroke-width="1.40"/></svg><svg class="a" style="left:636.0px;top:153.7px" width="7" height="7" viewBox="0 0 7 7"><rect x="0.4" y="0.4" width="6.2" height="6.2" fill="#fff" stroke="#333" stroke-width="0.6"/><path d="M1.5 3.6L2.9 5L5.5 1.9" fill="none" stroke="#222" stroke-width="0.7"/></svg><div class="t" style="left:645.5px;top:157.5px">Channel 1 (1<span style="font-family:'Noto Sans CJK JP',sans-serif">±</span>)</div><div class="a" style="left:721.5px;top:152.9px;width:11.5px;height:7.6px;background:#d9d9d9;border:0.5px solid #c2c2c2;box-sizing:border-box"></div><svg class="a" style="left:723.9px;top:153.3px" width="7" height="7" viewBox="0 0 9 9"><circle cx="4.5" cy="4.5" r="3.5" fill="none" stroke="#8e98a4" stroke-width="1.5" stroke-dasharray="1.5 1.25"/><circle cx="4.5" cy="4.5" r="2.7" fill="#e6eaef" stroke="#808b98" stroke-width="0.8"/><circle cx="4.5" cy="4.5" r="1.1" fill="#fbfcfd" stroke="#7a8694" stroke-width="0.5"/><path d="M4.5 4.5L6.3 6.3" stroke="#5f8fc8" stroke-width="0.7"/></svg><div class="t" style="left:638.3px;top:166.6px">Offset:</div><div class="a" style="left:674.5px;top:161.8px;width:58.7px;height:9.2px;background:#fff;border:0.6px solid #b4b4b4;box-sizing:border-box;color:#111"><span class="t" style="left:2.0px;top:4.2px">135 mV</span><svg class="a" style="right:2.0px;top:50%;margin-top:-1.3px" width="5.4" height="3.2" viewBox="0 0 5.4 3.2"><path d="M0.4 0.4L2.7 2.7L5 0.4" fill="none" stroke="#444" stroke-width="0.65"/></svg></div><div class="t" style="left:638.3px;top:176.4px">Range:</div><div class="a" style="left:674.5px;top:171.9px;width:58.7px;height:9.0px;background:#fff;border:0.6px solid #b4b4b4;box-sizing:border-box;color:#111"><span class="t" style="left:2.0px;top:4.1px">50 mV/div</span><svg class="a" style="right:2.0px;top:50%;margin-top:-1.3px" width="5.4" height="3.2" viewBox="0 0 5.4 3.2"><path d="M0.4 0.4L2.7 2.7L5 0.4" fill="none" stroke="#444" stroke-width="0.65"/></svg></div>
<svg class="a" style="left:633px;top:182.7px" width="105" height="34.4" viewBox="0 0 105 34.4"><rect x="2.25" y="2.25" width="99.70" height="29.90" fill="#ececec" stroke="#19a6da" stroke-width="1.50"/></svg><svg class="a" style="left:636.0px;top:186.7px" width="7" height="7" viewBox="0 0 7 7"><rect x="0.4" y="0.4" width="6.2" height="6.2" fill="#fff" stroke="#333" stroke-width="0.6"/><path d="M1.5 3.6L2.9 5L5.5 1.9" fill="none" stroke="#222" stroke-width="0.7"/></svg><div class="t" style="left:645.5px;top:190.5px">Channel 2 (2<span style="font-family:'Noto Sans CJK JP',sans-serif">±</span>)</div><div class="a" style="left:721.5px;top:185.9px;width:11.5px;height:7.6px;background:#d9d9d9;border:0.5px solid #c2c2c2;box-sizing:border-box"></div><svg class="a" style="left:723.9px;top:186.3px" width="7" height="7" viewBox="0 0 9 9"><circle cx="4.5" cy="4.5" r="3.5" fill="none" stroke="#8e98a4" stroke-width="1.5" stroke-dasharray="1.5 1.25"/><circle cx="4.5" cy="4.5" r="2.7" fill="#e6eaef" stroke="#808b98" stroke-width="0.8"/><circle cx="4.5" cy="4.5" r="1.1" fill="#fbfcfd" stroke="#7a8694" stroke-width="0.5"/><path d="M4.5 4.5L6.3 6.3" stroke="#5f8fc8" stroke-width="0.7"/></svg><div class="t" style="left:638.3px;top:199.6px">Offset:</div><div class="a" style="left:674.5px;top:194.8px;width:58.7px;height:9.2px;background:#fff;border:0.6px solid #b4b4b4;box-sizing:border-box;color:#111"><span class="t" style="left:2.0px;top:4.2px">15 V</span><svg class="a" style="right:2.0px;top:50%;margin-top:-1.3px" width="5.4" height="3.2" viewBox="0 0 5.4 3.2"><path d="M0.4 0.4L2.7 2.7L5 0.4" fill="none" stroke="#444" stroke-width="0.65"/></svg></div><div class="t" style="left:638.3px;top:209.4px">Range:</div><div class="a" style="left:674.5px;top:204.9px;width:58.7px;height:9.0px;background:#fff;border:0.6px solid #b4b4b4;box-sizing:border-box;color:#111"><span class="t" style="left:2.0px;top:4.1px">5 V/div</span><svg class="a" style="right:2.0px;top:50%;margin-top:-1.3px" width="5.4" height="3.2" viewBox="0 0 5.4 3.2"><path d="M0.4 0.4L2.7 2.7L5 0.4" fill="none" stroke="#444" stroke-width="0.65"/></svg></div>
</div></body></html>
